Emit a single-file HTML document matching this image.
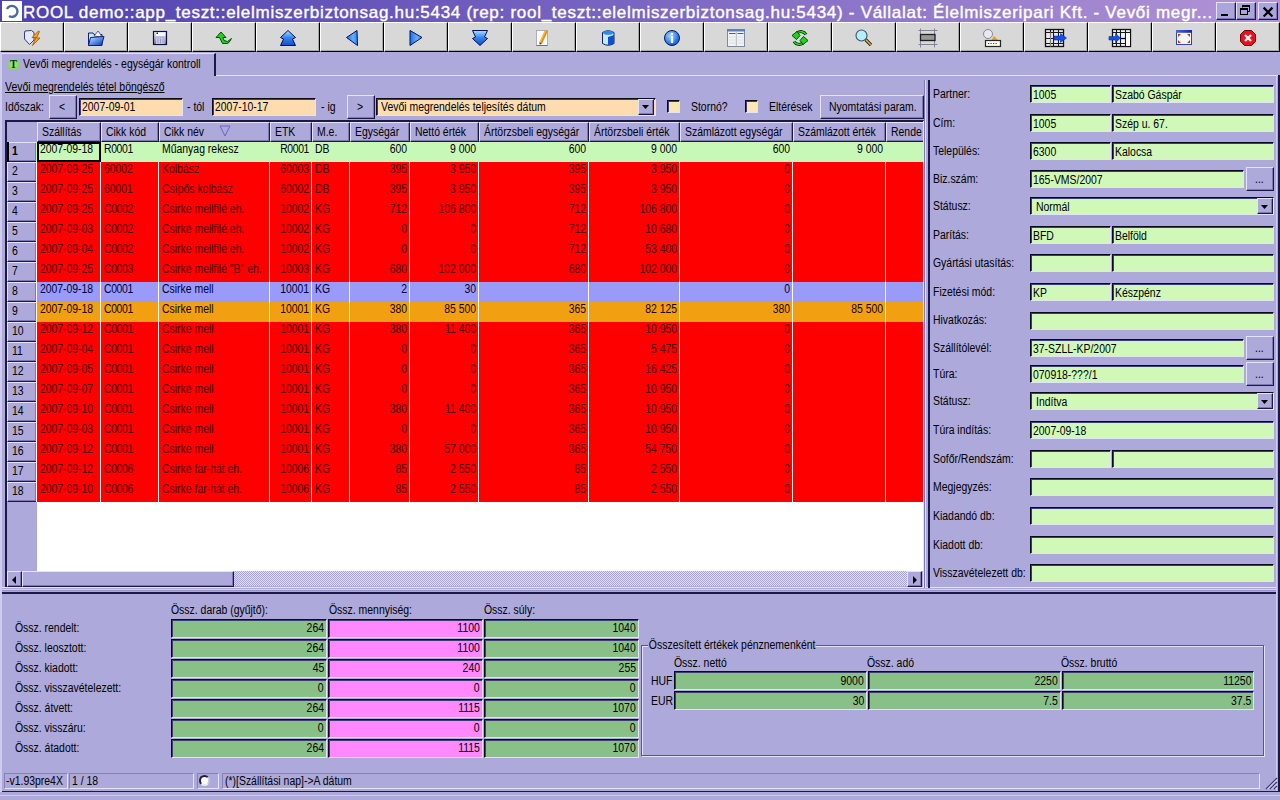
<!DOCTYPE html>
<html><head><meta charset="utf-8"><style>
html,body{margin:0;padding:0;width:1280px;height:800px;overflow:hidden;background:#ada9da;font-family:"Liberation Sans", sans-serif;font-size:11px;color:#000}
div{font-family:"Liberation Sans", sans-serif;letter-spacing:0px;white-space:nowrap}
</style></head><body>
<div style="position:absolute;left:0px;top:0px;width:1280px;height:22px;background:linear-gradient(to right,#4e42b0 0%,#7a66c2 50%,#b294d6 100%)"></div>
<div style="position:absolute;left:2px;top:1px;width:20px;height:20px;background:#fff"></div>
<svg style="position:absolute;left:4px;top:3px" width="16" height="16" viewBox="0 0 16 16"><path d="M3 6 A5.5 5.5 0 1 1 5 13" fill="none" stroke="#4a6aa0" stroke-width="2.4"/></svg>
<div style="position:absolute;left:23px;top:3px;font-size:17px;line-height:19px;color:#fff;white-space:nowrap;line-height:20px;letter-spacing:0.717px;-webkit-text-stroke:0.4px #fff;">ROOL demo::app_teszt::elelmiszerbiztonsag.hu:5434 (rep: rool_teszt::elelmiszerbiztonsag.hu:5434) - Vállalat: Élelmiszeripari Kft. - Vevői megr...</div>
<div style="position:absolute;left:1216px;top:2px;width:20px;height:18px;box-sizing:border-box;background:#aaa6d8;border-top:1px solid #e4e2f6;border-left:1px solid #e4e2f6;border-bottom:1px solid #1c1848;border-right:1px solid #1c1848;box-shadow:inset -1px -1px 0 #7c78b4;"></div>
<div style="position:absolute;left:1236px;top:2px;width:20px;height:18px;box-sizing:border-box;background:#aaa6d8;border-top:1px solid #e4e2f6;border-left:1px solid #e4e2f6;border-bottom:1px solid #1c1848;border-right:1px solid #1c1848;box-shadow:inset -1px -1px 0 #7c78b4;"></div>
<div style="position:absolute;left:1258px;top:2px;width:20px;height:18px;box-sizing:border-box;background:#aaa6d8;border-top:1px solid #e4e2f6;border-left:1px solid #e4e2f6;border-bottom:1px solid #1c1848;border-right:1px solid #1c1848;box-shadow:inset -1px -1px 0 #7c78b4;"></div>
<div style="position:absolute;left:1221px;top:14px;width:7px;height:2px;background:#000"></div>
<svg style="position:absolute;left:1239px;top:4px" width="12" height="12" viewBox="0 0 12 12"><path d="M3.5 1.5h7v6h-2M3.5 1.5v2" fill="none" stroke="#000" stroke-width="1"/><path d="M3 1h8v2H3z" fill="#000"/><rect x="1.5" y="4.5" width="7" height="6" fill="none" stroke="#000"/><rect x="1" y="4" width="8" height="2" fill="#000"/></svg>
<svg style="position:absolute;left:1262px;top:6px" width="11" height="11" viewBox="0 0 10 10"><path d="M1.5 1.5L9.5 9.5M9.5 1.5L1.5 9.5" stroke="#000" stroke-width="2"/></svg>
<div style="position:absolute;left:0px;top:22px;width:64px;height:30px;box-sizing:border-box;background:#d8d8d8;border-top:1px solid #fff;border-left:1px solid #fff;border-bottom:1px solid #000;border-right:1px solid #000;box-shadow:inset -1px -1px 0 #a8a8a8"></div>
<div style="position:absolute;left:64px;top:22px;width:64px;height:30px;box-sizing:border-box;background:#d8d8d8;border-top:1px solid #fff;border-left:1px solid #fff;border-bottom:1px solid #000;border-right:1px solid #000;box-shadow:inset -1px -1px 0 #a8a8a8"></div>
<div style="position:absolute;left:128px;top:22px;width:64px;height:30px;box-sizing:border-box;background:#d8d8d8;border-top:1px solid #fff;border-left:1px solid #fff;border-bottom:1px solid #000;border-right:1px solid #000;box-shadow:inset -1px -1px 0 #a8a8a8"></div>
<div style="position:absolute;left:192px;top:22px;width:64px;height:30px;box-sizing:border-box;background:#d8d8d8;border-top:1px solid #fff;border-left:1px solid #fff;border-bottom:1px solid #000;border-right:1px solid #000;box-shadow:inset -1px -1px 0 #a8a8a8"></div>
<div style="position:absolute;left:256px;top:22px;width:64px;height:30px;box-sizing:border-box;background:#d8d8d8;border-top:1px solid #fff;border-left:1px solid #fff;border-bottom:1px solid #000;border-right:1px solid #000;box-shadow:inset -1px -1px 0 #a8a8a8"></div>
<div style="position:absolute;left:320px;top:22px;width:64px;height:30px;box-sizing:border-box;background:#d8d8d8;border-top:1px solid #fff;border-left:1px solid #fff;border-bottom:1px solid #000;border-right:1px solid #000;box-shadow:inset -1px -1px 0 #a8a8a8"></div>
<div style="position:absolute;left:384px;top:22px;width:64px;height:30px;box-sizing:border-box;background:#d8d8d8;border-top:1px solid #fff;border-left:1px solid #fff;border-bottom:1px solid #000;border-right:1px solid #000;box-shadow:inset -1px -1px 0 #a8a8a8"></div>
<div style="position:absolute;left:448px;top:22px;width:64px;height:30px;box-sizing:border-box;background:#d8d8d8;border-top:1px solid #fff;border-left:1px solid #fff;border-bottom:1px solid #000;border-right:1px solid #000;box-shadow:inset -1px -1px 0 #a8a8a8"></div>
<div style="position:absolute;left:512px;top:22px;width:64px;height:30px;box-sizing:border-box;background:#d8d8d8;border-top:1px solid #fff;border-left:1px solid #fff;border-bottom:1px solid #000;border-right:1px solid #000;box-shadow:inset -1px -1px 0 #a8a8a8"></div>
<div style="position:absolute;left:576px;top:22px;width:64px;height:30px;box-sizing:border-box;background:#d8d8d8;border-top:1px solid #fff;border-left:1px solid #fff;border-bottom:1px solid #000;border-right:1px solid #000;box-shadow:inset -1px -1px 0 #a8a8a8"></div>
<div style="position:absolute;left:640px;top:22px;width:64px;height:30px;box-sizing:border-box;background:#d8d8d8;border-top:1px solid #fff;border-left:1px solid #fff;border-bottom:1px solid #000;border-right:1px solid #000;box-shadow:inset -1px -1px 0 #a8a8a8"></div>
<div style="position:absolute;left:704px;top:22px;width:64px;height:30px;box-sizing:border-box;background:#d8d8d8;border-top:1px solid #fff;border-left:1px solid #fff;border-bottom:1px solid #000;border-right:1px solid #000;box-shadow:inset -1px -1px 0 #a8a8a8"></div>
<div style="position:absolute;left:768px;top:22px;width:64px;height:30px;box-sizing:border-box;background:#d8d8d8;border-top:1px solid #fff;border-left:1px solid #fff;border-bottom:1px solid #000;border-right:1px solid #000;box-shadow:inset -1px -1px 0 #a8a8a8"></div>
<div style="position:absolute;left:832px;top:22px;width:64px;height:30px;box-sizing:border-box;background:#d8d8d8;border-top:1px solid #fff;border-left:1px solid #fff;border-bottom:1px solid #000;border-right:1px solid #000;box-shadow:inset -1px -1px 0 #a8a8a8"></div>
<div style="position:absolute;left:896px;top:22px;width:64px;height:30px;box-sizing:border-box;background:#d8d8d8;border-top:1px solid #fff;border-left:1px solid #fff;border-bottom:1px solid #000;border-right:1px solid #000;box-shadow:inset -1px -1px 0 #a8a8a8"></div>
<div style="position:absolute;left:960px;top:22px;width:64px;height:30px;box-sizing:border-box;background:#d8d8d8;border-top:1px solid #fff;border-left:1px solid #fff;border-bottom:1px solid #000;border-right:1px solid #000;box-shadow:inset -1px -1px 0 #a8a8a8"></div>
<div style="position:absolute;left:1024px;top:22px;width:64px;height:30px;box-sizing:border-box;background:#d8d8d8;border-top:1px solid #fff;border-left:1px solid #fff;border-bottom:1px solid #000;border-right:1px solid #000;box-shadow:inset -1px -1px 0 #a8a8a8"></div>
<div style="position:absolute;left:1088px;top:22px;width:64px;height:30px;box-sizing:border-box;background:#d8d8d8;border-top:1px solid #fff;border-left:1px solid #fff;border-bottom:1px solid #000;border-right:1px solid #000;box-shadow:inset -1px -1px 0 #a8a8a8"></div>
<div style="position:absolute;left:1152px;top:22px;width:64px;height:30px;box-sizing:border-box;background:#d8d8d8;border-top:1px solid #fff;border-left:1px solid #fff;border-bottom:1px solid #000;border-right:1px solid #000;box-shadow:inset -1px -1px 0 #a8a8a8"></div>
<div style="position:absolute;left:1216px;top:22px;width:64px;height:30px;box-sizing:border-box;background:#d8d8d8;border-top:1px solid #fff;border-left:1px solid #fff;border-bottom:1px solid #000;border-right:1px solid #000;box-shadow:inset -1px -1px 0 #a8a8a8"></div>
<svg style="position:absolute;left:0px;top:0px" width="0" height="0" viewBox="0 0 24 24"><defs>
<linearGradient id="gb" x1="0" y1="0" x2="0" y2="1"><stop offset="0" stop-color="#a8e0ff"/><stop offset="0.5" stop-color="#3080f0"/><stop offset="1" stop-color="#1050d0"/></linearGradient>
<linearGradient id="gbh" x1="0" y1="0" x2="1" y2="0"><stop offset="0" stop-color="#2070e0"/><stop offset="0.6" stop-color="#60b0ff"/><stop offset="1" stop-color="#3080f0"/></linearGradient>
<linearGradient id="gf" x1="0" y1="0" x2="1" y2="1"><stop offset="0" stop-color="#c0f0ff"/><stop offset="1" stop-color="#0030c0"/></linearGradient>
<linearGradient id="gfl" x1="0" y1="0" x2="0" y2="1"><stop offset="0" stop-color="#f0f4ff"/><stop offset="1" stop-color="#7070a0"/></linearGradient>
<radialGradient id="gi" cx="0.4" cy="0.35" r="0.7"><stop offset="0" stop-color="#a0d8ff"/><stop offset="1" stop-color="#0050e0"/></radialGradient>
</defs></svg>
<svg style="position:absolute;left:20px;top:26px" width="24" height="24" viewBox="0 0 24 24"><polygon points="5,5 11.5,4.5 14,6.5 14,14 9.5,18.5 4.5,13 4.5,7" fill="#e4e8fc" stroke="#3a3a80" stroke-width="1"/><polygon points="18.5,5 12,11.5 16,11.5 12.5,19.5 20,12 16.5,12 19.5,5.5" fill="#f4a820" stroke="#b05800" stroke-width="0.9"/></svg>
<svg style="position:absolute;left:84px;top:26px" width="24" height="24" viewBox="0 0 24 24"><polygon points="4.5,7 9,7 10,8.5 18,8.5 18,19.5 4.5,19.5" fill="#c8e8ff" stroke="#10207a" stroke-width="1"/><polygon points="10,10 14,5 17,9 17,11" fill="#f0f0ff" stroke="#404070" stroke-width="0.8"/><polygon points="6.5,11.5 20,10.5 17.5,19.5 4.5,19.5" fill="url(#gf)" stroke="#10207a" stroke-width="1"/></svg>
<svg style="position:absolute;left:148px;top:26px" width="24" height="24" viewBox="0 0 24 24"><rect x="5.5" y="5.5" width="13" height="13" fill="url(#gfl)" stroke="#101040" stroke-width="1.2"/><rect x="8" y="6.5" width="9" height="3.5" fill="#f4f8ff"/><rect x="8.5" y="6.5" width="1.5" height="1.5" fill="#202050"/><rect x="8" y="12" width="8.5" height="6" fill="#c8c8e8"/><path d="M10 12.5v5M12.5 12.5v5M15 12.5v5" stroke="#9090b8" stroke-width="0.8"/></svg>
<svg style="position:absolute;left:212px;top:26px" width="24" height="24" viewBox="0 0 24 24"><polygon points="4,11.5 9,6 14,11.5 11,11.5 12,14.5 15.5,15.5 19.5,12.5 17,16.5 15,17.5 10.5,17.5 7.5,11.5" fill="#18d818" stroke="#003a00" stroke-width="0.9"/></svg>
<svg style="position:absolute;left:276px;top:26px" width="24" height="24" viewBox="0 0 24 24"><polygon points="12,4.5 19.5,11.5 16.5,13 19.5,19.5 4.5,19.5 7.5,13 4.5,11.5" fill="url(#gb)" stroke="#001060" stroke-width="1"/></svg>
<svg style="position:absolute;left:340px;top:26px" width="24" height="24" viewBox="0 0 24 24"><polygon points="6.5,11.5 17,4.5 17.5,19.5" fill="url(#gbh)" stroke="#001060" stroke-width="1"/></svg>
<svg style="position:absolute;left:404px;top:26px" width="24" height="24" viewBox="0 0 24 24"><polygon points="6,4.5 18,11.5 6,19.5" fill="url(#gbh)" stroke="#001060" stroke-width="1"/></svg>
<svg style="position:absolute;left:468px;top:26px" width="24" height="24" viewBox="0 0 24 24"><polygon points="4.5,4.5 19.5,4.5 16.5,11 19.5,12.5 12,19.5 4.5,12.5 7.5,11" fill="url(#gb)" stroke="#001060" stroke-width="1"/></svg>
<svg style="position:absolute;left:532px;top:26px" width="24" height="24" viewBox="0 0 24 24"><rect x="4.5" y="4.5" width="11" height="15" fill="#f8fcff" stroke="#a0a0b0" stroke-width="0.8"/><path d="M4.5 19.5h11" stroke="#707080" stroke-width="1"/><path d="M8.5 17.5L14.5 4.5" stroke="#e89020" stroke-width="3"/><path d="M7.8 17L13.5 4.5" stroke="#f8d040" stroke-width="1"/><circle cx="8.3" cy="17.5" r="0.9" fill="#604020"/></svg>
<svg style="position:absolute;left:596px;top:26px" width="24" height="24" viewBox="0 0 24 24"><path d="M6.5 6.5Q12 3 18 6.5V17.5Q12 21 6.5 17.5Z" fill="#c0ecff" stroke="#102060" stroke-width="1"/><ellipse cx="12.2" cy="6.8" rx="5" ry="2" fill="#3088f0"/><path d="M12 11L18 9V17.5Q15 19 12 19Z" fill="#1050d0"/></svg>
<svg style="position:absolute;left:660px;top:26px" width="24" height="24" viewBox="0 0 24 24"><circle cx="12" cy="12" r="7.5" fill="url(#gi)" stroke="#001a60" stroke-width="1"/><rect x="10.8" y="10" width="2.4" height="7" fill="#f0f8ff"/><circle cx="12" cy="8" r="1.3" fill="#f0f8ff"/></svg>
<svg style="position:absolute;left:724px;top:26px" width="24" height="24" viewBox="0 0 24 24"><rect x="3.5" y="3.5" width="17" height="17" fill="#f0f2f4" stroke="#8088a0" stroke-width="1"/><rect x="3" y="3" width="18" height="2.5" fill="#6080b0"/><path d="M12.3 5.5v15" stroke="#b0b8c0" stroke-width="1"/><path d="M5 7.5h6.5M13.5 7.5h6" stroke="#506070" stroke-width="1"/><path d="M5 11h6M13.5 11h6M5 14h6M13.5 14h6M5 17h6M13.5 17h6" stroke="#d8dce0" stroke-width="0.8"/></svg>
<svg style="position:absolute;left:788px;top:26px" width="24" height="24" viewBox="0 0 24 24"><path d="M18 8.5C16 5.2 12 4.8 9 7" fill="none" stroke="#003a00" stroke-width="3"/><path d="M18 8.5C16 5.2 12 4.8 9 7" fill="none" stroke="#30e030" stroke-width="1.4"/><polygon points="4,9.5 9,5.5 12,9.5 8.5,13.5" fill="#18d818" stroke="#003a00" stroke-width="0.9"/><path d="M6 15.5C8 18.8 12 19.2 15 17" fill="none" stroke="#003a00" stroke-width="3"/><path d="M6 15.5C8 18.8 12 19.2 15 17" fill="none" stroke="#30e030" stroke-width="1.4"/><polygon points="20,14.5 15,18.5 12,14.5 15.5,10.5" fill="#18d818" stroke="#003a00" stroke-width="0.9"/></svg>
<svg style="position:absolute;left:852px;top:26px" width="24" height="24" viewBox="0 0 24 24"><path d="M13.5 13.5L19 19" stroke="#302000" stroke-width="3.2"/><path d="M13.8 13.8L18.8 18.8" stroke="#d8b060" stroke-width="1.6"/><circle cx="9.5" cy="9.5" r="5.5" fill="#b8ecfc" stroke="#305868" stroke-width="1.1"/></svg>
<svg style="position:absolute;left:916px;top:26px" width="24" height="24" viewBox="0 0 24 24"><path d="M2.5 4.5h19M2.5 18.5h19M4.5 2.5v19M18.5 2.5v19" stroke="#7a7a9a" stroke-width="0.9"/><rect x="4.5" y="8.5" width="14.5" height="6" fill="#989898" stroke="#202020" stroke-width="1.3"/></svg>
<svg style="position:absolute;left:980px;top:26px" width="24" height="24" viewBox="0 0 24 24"><circle cx="8" cy="8" r="4.5" fill="#e8eaf0" stroke="#8088a0" stroke-width="1"/><polygon points="11.5,14 14,10 18,14" fill="#e8a010"/><rect x="5.5" y="14.5" width="15" height="6" fill="#fafaf4" stroke="#202820" stroke-width="1.2"/><path d="M8 17.5h10" stroke="#404040" stroke-width="1.2" stroke-dasharray="1.2 1.3"/></svg>
<svg style="position:absolute;left:1044px;top:26px" width="24" height="24" viewBox="0 0 24 24"><rect x="1.5" y="3.5" width="18" height="17" fill="#ece8f4" stroke="#101010" stroke-width="1.3"/><path d="M1.5 6.5h18M1.5 12.5h18M1.5 17.5h18M6.5 3.5v17M9.5 3.5v17M14.5 3.5v17" stroke="#181818" stroke-width="1.1"/><path d="M6.5 6.5v14" stroke="#808070" stroke-width="1"/><polygon points="10,10 16.5,10 16.5,7.5 22.5,12 16.5,16.5 16.5,14 10,14" fill="#1050f0" stroke="#0830a0" stroke-width="0.6"/></svg>
<svg style="position:absolute;left:1108px;top:26px" width="24" height="24" viewBox="0 0 24 24"><rect x="4.5" y="3.5" width="18" height="17" fill="#f4f4f8" stroke="#101010" stroke-width="1.3"/><path d="M4.5 6.5h18M4.5 17.5h13M8.5 3.5v17M12.5 3.5v17M17.5 3.5v17" stroke="#181818" stroke-width="1.1"/><rect x="18" y="7" width="4" height="13" fill="#fcfcf8"/><path d="M13 12.5h4" stroke="#000" stroke-width="1.3"/><polygon points="1,10.5 7.5,10.5 7.5,7.5 12.5,12 7.5,16.5 7.5,14 1,14" fill="#1050f0" stroke="#0830a0" stroke-width="0.6"/></svg>
<svg style="position:absolute;left:1172px;top:26px" width="24" height="24" viewBox="0 0 24 24"><defs><linearGradient id="gt19" x1="0" y1="0" x2="1" y2="0"><stop offset="0" stop-color="#4070d0"/><stop offset="1" stop-color="#0828b0"/></linearGradient></defs><rect x="4.5" y="4.5" width="15" height="14" fill="#f8f4f8" stroke="#2848a8" stroke-width="1"/><rect x="4" y="4" width="16" height="2.8" fill="url(#gt19)"/><polygon points="6,8 9,8 6,11" fill="#d03010"/><polygon points="18,8 15,8 18,11" fill="#d03010"/><polygon points="6,17 9,17 6,14" fill="#d03010"/><polygon points="18,17 15,17 18,14" fill="#d03010"/></svg>
<svg style="position:absolute;left:1236px;top:26px" width="24" height="24" viewBox="0 0 24 24"><polygon points="8.5,4.5 15.5,4.5 19.5,8.5 19.5,15.5 15.5,19.5 8.5,19.5 4.5,15.5 4.5,8.5" fill="#e81020" stroke="#700008" stroke-width="1"/><path d="M9 9L15 15M15 9L9 15" stroke="#fff8f0" stroke-width="2.4"/></svg>
<div style="position:absolute;left:0px;top:52px;width:1280px;height:748px;background:#ada9da"></div>
<div style="position:absolute;left:0px;top:53px;width:216px;height:23px;box-sizing:border-box;border-top:1px solid #e4e2f6;border-left:1px solid #e4e2f6;border-right:2px solid #1c1848;background:#ada9da"></div>
<div style="position:absolute;left:216px;top:75px;width:1064px;height:1px;background:#e4e2f6"></div>
<div style="position:absolute;left:8px;top:59px;width:11px;height:11px;background:radial-gradient(circle,#98e070 30%,#88c070 100%);border-radius:3px"></div>
<div style="position:absolute;left:10px;top:58px;font-size:12px;transform:scaleX(0.87);transform-origin:0 0;line-height:13px;color:#003800;white-space:nowrap;font-weight:bold;font-family:Liberation Serif,serif;">T</div>
<div style="position:absolute;left:23px;top:58px;font-size:12px;transform:scaleX(0.87);transform-origin:0 0;line-height:13px;color:#000;white-space:nowrap;">Vevői megrendelés - egységár kontroll</div>
<div style="position:absolute;left:5px;top:81px;font-size:12px;transform:scaleX(0.87);transform-origin:0 0;line-height:13px;color:#000;white-space:nowrap;"><u>Vevői megrendelés tétel böngésző</u></div>
<div style="position:absolute;left:5px;top:101px;font-size:12px;transform:scaleX(0.87);transform-origin:0 0;line-height:13px;color:#000;white-space:nowrap;">Időszak:</div>
<div style="position:absolute;left:49px;top:95px;width:28px;height:24px;box-sizing:border-box;background:#ada9da;border-top:1px solid #e4e2f6;border-left:1px solid #e4e2f6;border-bottom:1px solid #1c1848;border-right:1px solid #1c1848;box-shadow:inset -1px -1px 0 #7c78b4;"><div style="position:absolute;left:9px;top:4px;font-size:12px;transform:scaleX(0.87);transform-origin:0 0">&lt;</div></div>
<div style="position:absolute;left:79px;top:98px;width:104px;height:18px;box-sizing:border-box;background:#fedcb0;border-top:1px solid #0c0a20;border-left:1px solid #0c0a20;border-bottom:1px solid #e4e2f6;border-right:1px solid #e4e2f6;box-shadow:inset 1px 1px 0 #403c70;"><div style="position:absolute;left:2px;top:1px;font-size:12px;transform:scaleX(0.87);transform-origin:0 0">2007-09-01</div></div>
<div style="position:absolute;left:187px;top:101px;font-size:12px;transform:scaleX(0.87);transform-origin:0 0;line-height:13px;color:#000;white-space:nowrap;">- tól</div>
<div style="position:absolute;left:212px;top:98px;width:104px;height:18px;box-sizing:border-box;background:#fedcb0;border-top:1px solid #0c0a20;border-left:1px solid #0c0a20;border-bottom:1px solid #e4e2f6;border-right:1px solid #e4e2f6;box-shadow:inset 1px 1px 0 #403c70;"><div style="position:absolute;left:2px;top:1px;font-size:12px;transform:scaleX(0.87);transform-origin:0 0">2007-10-17</div></div>
<div style="position:absolute;left:321px;top:101px;font-size:12px;transform:scaleX(0.87);transform-origin:0 0;line-height:13px;color:#000;white-space:nowrap;">- ig</div>
<div style="position:absolute;left:347px;top:95px;width:28px;height:24px;box-sizing:border-box;background:#ada9da;border-top:1px solid #e4e2f6;border-left:1px solid #e4e2f6;border-bottom:1px solid #1c1848;border-right:1px solid #1c1848;box-shadow:inset -1px -1px 0 #7c78b4;"><div style="position:absolute;left:9px;top:4px;font-size:12px;transform:scaleX(0.87);transform-origin:0 0">&gt;</div></div>
<div style="position:absolute;left:376px;top:98px;width:280px;height:18px;box-sizing:border-box;background:#fedcb0;border-top:1px solid #0c0a20;border-left:1px solid #0c0a20;border-bottom:1px solid #e4e2f6;border-right:1px solid #e4e2f6;box-shadow:inset 1px 1px 0 #403c70;"><div style="position:absolute;left:4px;top:1px;font-size:12px;transform:scaleX(0.87);transform-origin:0 0">Vevői megrendelés teljesítés dátum</div></div>
<div style="position:absolute;left:638px;top:99px;width:16px;height:16px;box-sizing:border-box;background:#ada9da;border-top:1px solid #e4e2f6;border-left:1px solid #e4e2f6;border-bottom:1px solid #1c1848;border-right:1px solid #1c1848;box-shadow:inset -1px -1px 0 #7c78b4;"><svg style="position:absolute;left:3px;top:5px" width="8" height="5"><path d="M0 0h7l-3.5 4z" fill="#000"/></svg></div>
<div style="position:absolute;left:667px;top:100px;width:13px;height:13px;box-sizing:border-box;background:#fce6b4;border-top:1px solid #0c0a20;border-left:1px solid #0c0a20;border-bottom:1px solid #e4e2f6;border-right:1px solid #e4e2f6;box-shadow:inset 1px 1px 0 #403c70;"></div>
<div style="position:absolute;left:691px;top:101px;font-size:12px;transform:scaleX(0.87);transform-origin:0 0;line-height:13px;color:#000;white-space:nowrap;">Stornó?</div>
<div style="position:absolute;left:745px;top:100px;width:13px;height:13px;box-sizing:border-box;background:#fce6b4;border-top:1px solid #0c0a20;border-left:1px solid #0c0a20;border-bottom:1px solid #e4e2f6;border-right:1px solid #e4e2f6;box-shadow:inset 1px 1px 0 #403c70;"></div>
<div style="position:absolute;left:769px;top:101px;font-size:12px;transform:scaleX(0.87);transform-origin:0 0;line-height:13px;color:#000;white-space:nowrap;">Eltérések</div>
<div style="position:absolute;left:820px;top:95px;width:104px;height:24px;box-sizing:border-box;background:#ada9da;border-top:1px solid #e4e2f6;border-left:1px solid #e4e2f6;border-bottom:1px solid #1c1848;border-right:1px solid #1c1848;box-shadow:inset -1px -1px 0 #7c78b4;"><div style="position:absolute;left:8px;top:4px;font-size:12px;transform:scaleX(0.87);transform-origin:0 0">Nyomtatási param.</div></div>
<div style="position:absolute;left:5px;top:120px;width:919px;height:468px;box-sizing:border-box;border-top:2px solid #1c1848;border-left:2px solid #1c1848;border-bottom:1px solid #e4e2f6;border-right:1px solid #e4e2f6;background:#ada9da"></div>
<div style="position:absolute;left:37px;top:141px;width:886px;height:430px;background:#fff"></div>
<div style="position:absolute;left:7px;top:122px;width:30px;height:19px;background:#ada9da"></div>
<div style="position:absolute;left:37px;top:122px;width:64px;height:20px;box-sizing:border-box;background:#ada9da;border-top:1px solid #e4e2f6;border-left:1px solid #e4e2f6;border-bottom:1px solid #1c1848;border-right:1px solid #1c1848;box-shadow:inset -1px -1px 0 #7c78b4;overflow:hidden;"><div style="position:absolute;left:4px;top:2px;font-size:12px;transform:scaleX(0.87);transform-origin:0 0;white-space:nowrap">Szállítás</div></div>
<div style="position:absolute;left:101px;top:122px;width:58px;height:20px;box-sizing:border-box;background:#ada9da;border-top:1px solid #e4e2f6;border-left:1px solid #e4e2f6;border-bottom:1px solid #1c1848;border-right:1px solid #1c1848;box-shadow:inset -1px -1px 0 #7c78b4;overflow:hidden;"><div style="position:absolute;left:4px;top:2px;font-size:12px;transform:scaleX(0.87);transform-origin:0 0;white-space:nowrap">Cikk kód</div></div>
<div style="position:absolute;left:159px;top:122px;width:111px;height:20px;box-sizing:border-box;background:#ada9da;border-top:1px solid #e4e2f6;border-left:1px solid #e4e2f6;border-bottom:1px solid #1c1848;border-right:1px solid #1c1848;box-shadow:inset -1px -1px 0 #7c78b4;overflow:hidden;"><div style="position:absolute;left:4px;top:2px;font-size:12px;transform:scaleX(0.87);transform-origin:0 0;white-space:nowrap">Cikk név</div></div>
<div style="position:absolute;left:270px;top:122px;width:42px;height:20px;box-sizing:border-box;background:#ada9da;border-top:1px solid #e4e2f6;border-left:1px solid #e4e2f6;border-bottom:1px solid #1c1848;border-right:1px solid #1c1848;box-shadow:inset -1px -1px 0 #7c78b4;overflow:hidden;"><div style="position:absolute;left:4px;top:2px;font-size:12px;transform:scaleX(0.87);transform-origin:0 0;white-space:nowrap">ETK</div></div>
<div style="position:absolute;left:312px;top:122px;width:38px;height:20px;box-sizing:border-box;background:#ada9da;border-top:1px solid #e4e2f6;border-left:1px solid #e4e2f6;border-bottom:1px solid #1c1848;border-right:1px solid #1c1848;box-shadow:inset -1px -1px 0 #7c78b4;overflow:hidden;"><div style="position:absolute;left:4px;top:2px;font-size:12px;transform:scaleX(0.87);transform-origin:0 0;white-space:nowrap">M.e.</div></div>
<div style="position:absolute;left:350px;top:122px;width:60px;height:20px;box-sizing:border-box;background:#ada9da;border-top:1px solid #e4e2f6;border-left:1px solid #e4e2f6;border-bottom:1px solid #1c1848;border-right:1px solid #1c1848;box-shadow:inset -1px -1px 0 #7c78b4;overflow:hidden;"><div style="position:absolute;left:4px;top:2px;font-size:12px;transform:scaleX(0.87);transform-origin:0 0;white-space:nowrap">Egységár</div></div>
<div style="position:absolute;left:410px;top:122px;width:69px;height:20px;box-sizing:border-box;background:#ada9da;border-top:1px solid #e4e2f6;border-left:1px solid #e4e2f6;border-bottom:1px solid #1c1848;border-right:1px solid #1c1848;box-shadow:inset -1px -1px 0 #7c78b4;overflow:hidden;"><div style="position:absolute;left:4px;top:2px;font-size:12px;transform:scaleX(0.87);transform-origin:0 0;white-space:nowrap">Nettó érték</div></div>
<div style="position:absolute;left:479px;top:122px;width:110px;height:20px;box-sizing:border-box;background:#ada9da;border-top:1px solid #e4e2f6;border-left:1px solid #e4e2f6;border-bottom:1px solid #1c1848;border-right:1px solid #1c1848;box-shadow:inset -1px -1px 0 #7c78b4;overflow:hidden;"><div style="position:absolute;left:4px;top:2px;font-size:12px;transform:scaleX(0.87);transform-origin:0 0;white-space:nowrap">Ártörzsbeli egységár</div></div>
<div style="position:absolute;left:589px;top:122px;width:91px;height:20px;box-sizing:border-box;background:#ada9da;border-top:1px solid #e4e2f6;border-left:1px solid #e4e2f6;border-bottom:1px solid #1c1848;border-right:1px solid #1c1848;box-shadow:inset -1px -1px 0 #7c78b4;overflow:hidden;"><div style="position:absolute;left:4px;top:2px;font-size:12px;transform:scaleX(0.87);transform-origin:0 0;white-space:nowrap">Ártörzsbeli érték</div></div>
<div style="position:absolute;left:680px;top:122px;width:113px;height:20px;box-sizing:border-box;background:#ada9da;border-top:1px solid #e4e2f6;border-left:1px solid #e4e2f6;border-bottom:1px solid #1c1848;border-right:1px solid #1c1848;box-shadow:inset -1px -1px 0 #7c78b4;overflow:hidden;"><div style="position:absolute;left:4px;top:2px;font-size:12px;transform:scaleX(0.87);transform-origin:0 0;white-space:nowrap">Számlázott egységár</div></div>
<div style="position:absolute;left:793px;top:122px;width:93px;height:20px;box-sizing:border-box;background:#ada9da;border-top:1px solid #e4e2f6;border-left:1px solid #e4e2f6;border-bottom:1px solid #1c1848;border-right:1px solid #1c1848;box-shadow:inset -1px -1px 0 #7c78b4;overflow:hidden;"><div style="position:absolute;left:4px;top:2px;font-size:12px;transform:scaleX(0.87);transform-origin:0 0;white-space:nowrap">Számlázott érték</div></div>
<div style="position:absolute;left:886px;top:122px;width:40px;height:20px;box-sizing:border-box;background:#ada9da;border-top:1px solid #e4e2f6;border-left:1px solid #e4e2f6;border-bottom:1px solid #1c1848;border-right:1px solid #1c1848;box-shadow:inset -1px -1px 0 #7c78b4;overflow:hidden;"><div style="position:absolute;left:4px;top:2px;font-size:12px;transform:scaleX(0.87);transform-origin:0 0;white-space:nowrap">Rende</div></div>
<svg style="position:absolute;left:219px;top:125px" width="12" height="12"><path d="M1 1h10L6 11z" fill="none" stroke="#6a64c8" stroke-width="1"/></svg>
<div style="position:absolute;left:7px;top:142px;width:30px;height:20px;box-sizing:border-box;background:#ada9da;border-top:1px solid #e4e2f6;border-left:1px solid #e4e2f6;border-bottom:1px solid #1c1848;border-right:1px solid #1c1848;box-shadow:inset -1px -1px 0 #7c78b4;"><div style="position:absolute;left:4px;top:2px;font-size:12px;transform:scaleX(0.87);transform-origin:0 0;line-height:13px;font-weight:bold;">1</div></div>
<div style="position:absolute;left:37px;top:142px;width:886px;height:20px;background:#c8f8b8"></div>
<div style="position:absolute;left:36px;top:142px;width:1px;height:20px;background:#c8f8b8"></div>
<div style="position:absolute;left:40px;top:142px;font-size:12px;transform:scaleX(0.87);transform-origin:0 0;color:#000;white-space:nowrap;letter-spacing:-0.05px;">2007-09-18</div>
<div style="position:absolute;left:100px;top:142px;width:1px;height:20px;background:#c8f8b8"></div>
<div style="position:absolute;left:104px;top:142px;font-size:12px;transform:scaleX(0.87);transform-origin:0 0;color:#000;white-space:nowrap;letter-spacing:-0.45px;">R0001</div>
<div style="position:absolute;left:158px;top:142px;width:1px;height:20px;background:#c8f8b8"></div>
<div style="position:absolute;left:162px;top:142px;font-size:12px;transform:scaleX(0.87);transform-origin:0 0;color:#000;white-space:nowrap;">Műanyag rekesz</div>
<div style="position:absolute;left:269px;top:142px;width:1px;height:20px;background:#c8f8b8"></div>
<div style="position:absolute;left:270px;top:142px;width:39px;text-align:right;font-size:12px;transform:scaleX(0.87);transform-origin:100% 0;color:#000;white-space:nowrap;letter-spacing:-0.45px;">R0001</div>
<div style="position:absolute;left:311px;top:142px;width:1px;height:20px;background:#c8f8b8"></div>
<div style="position:absolute;left:315px;top:142px;font-size:12px;transform:scaleX(0.87);transform-origin:0 0;color:#000;white-space:nowrap;">DB</div>
<div style="position:absolute;left:349px;top:142px;width:1px;height:20px;background:#c8f8b8"></div>
<div style="position:absolute;left:350px;top:142px;width:57px;text-align:right;font-size:12px;transform:scaleX(0.87);transform-origin:100% 0;color:#000;white-space:nowrap;letter-spacing:-0.05px;">600</div>
<div style="position:absolute;left:409px;top:142px;width:1px;height:20px;background:#c8f8b8"></div>
<div style="position:absolute;left:410px;top:142px;width:66px;text-align:right;font-size:12px;transform:scaleX(0.87);transform-origin:100% 0;color:#000;white-space:nowrap;letter-spacing:-0.05px;">9 000</div>
<div style="position:absolute;left:478px;top:142px;width:1px;height:20px;background:#c8f8b8"></div>
<div style="position:absolute;left:479px;top:142px;width:107px;text-align:right;font-size:12px;transform:scaleX(0.87);transform-origin:100% 0;color:#000;white-space:nowrap;letter-spacing:-0.05px;">600</div>
<div style="position:absolute;left:588px;top:142px;width:1px;height:20px;background:#c8f8b8"></div>
<div style="position:absolute;left:589px;top:142px;width:88px;text-align:right;font-size:12px;transform:scaleX(0.87);transform-origin:100% 0;color:#000;white-space:nowrap;letter-spacing:-0.05px;">9 000</div>
<div style="position:absolute;left:679px;top:142px;width:1px;height:20px;background:#c8f8b8"></div>
<div style="position:absolute;left:680px;top:142px;width:110px;text-align:right;font-size:12px;transform:scaleX(0.87);transform-origin:100% 0;color:#000;white-space:nowrap;letter-spacing:-0.05px;">600</div>
<div style="position:absolute;left:792px;top:142px;width:1px;height:20px;background:#c8f8b8"></div>
<div style="position:absolute;left:793px;top:142px;width:90px;text-align:right;font-size:12px;transform:scaleX(0.87);transform-origin:100% 0;color:#000;white-space:nowrap;letter-spacing:-0.05px;">9 000</div>
<div style="position:absolute;left:885px;top:142px;width:1px;height:20px;background:#c8f8b8"></div>
<div style="position:absolute;left:7px;top:162px;width:30px;height:20px;box-sizing:border-box;background:#ada9da;border-top:1px solid #e4e2f6;border-left:1px solid #e4e2f6;border-bottom:1px solid #1c1848;border-right:1px solid #1c1848;box-shadow:inset -1px -1px 0 #7c78b4;"><div style="position:absolute;left:4px;top:2px;font-size:12px;transform:scaleX(0.87);transform-origin:0 0;line-height:13px;">2</div></div>
<div style="position:absolute;left:37px;top:162px;width:886px;height:20px;background:#ff0000"></div>
<div style="position:absolute;left:36px;top:162px;width:1px;height:20px;background:#fff8f0"></div>
<div style="position:absolute;left:40px;top:162px;font-size:12px;transform:scaleX(0.87);transform-origin:0 0;color:#4a0000;white-space:nowrap;letter-spacing:-0.05px;">2007-09-25</div>
<div style="position:absolute;left:100px;top:162px;width:1px;height:20px;background:#fff8f0"></div>
<div style="position:absolute;left:104px;top:162px;font-size:12px;transform:scaleX(0.87);transform-origin:0 0;color:#4a0000;white-space:nowrap;letter-spacing:-0.05px;">60002</div>
<div style="position:absolute;left:158px;top:162px;width:1px;height:20px;background:#fff8f0"></div>
<div style="position:absolute;left:162px;top:162px;font-size:12px;transform:scaleX(0.87);transform-origin:0 0;color:#4a0000;white-space:nowrap;">Kolbász</div>
<div style="position:absolute;left:269px;top:162px;width:1px;height:20px;background:#fff8f0"></div>
<div style="position:absolute;left:270px;top:162px;width:39px;text-align:right;font-size:12px;transform:scaleX(0.87);transform-origin:100% 0;color:#4a0000;white-space:nowrap;letter-spacing:-0.05px;">60003</div>
<div style="position:absolute;left:311px;top:162px;width:1px;height:20px;background:#fff8f0"></div>
<div style="position:absolute;left:315px;top:162px;font-size:12px;transform:scaleX(0.87);transform-origin:0 0;color:#4a0000;white-space:nowrap;">DB</div>
<div style="position:absolute;left:349px;top:162px;width:1px;height:20px;background:#fff8f0"></div>
<div style="position:absolute;left:350px;top:162px;width:57px;text-align:right;font-size:12px;transform:scaleX(0.87);transform-origin:100% 0;color:#4a0000;white-space:nowrap;letter-spacing:-0.05px;">395</div>
<div style="position:absolute;left:409px;top:162px;width:1px;height:20px;background:#fff8f0"></div>
<div style="position:absolute;left:410px;top:162px;width:66px;text-align:right;font-size:12px;transform:scaleX(0.87);transform-origin:100% 0;color:#4a0000;white-space:nowrap;letter-spacing:-0.05px;">3 950</div>
<div style="position:absolute;left:478px;top:162px;width:1px;height:20px;background:#fff8f0"></div>
<div style="position:absolute;left:479px;top:162px;width:107px;text-align:right;font-size:12px;transform:scaleX(0.87);transform-origin:100% 0;color:#4a0000;white-space:nowrap;letter-spacing:-0.05px;">395</div>
<div style="position:absolute;left:588px;top:162px;width:1px;height:20px;background:#fff8f0"></div>
<div style="position:absolute;left:589px;top:162px;width:88px;text-align:right;font-size:12px;transform:scaleX(0.87);transform-origin:100% 0;color:#4a0000;white-space:nowrap;letter-spacing:-0.05px;">3 950</div>
<div style="position:absolute;left:679px;top:162px;width:1px;height:20px;background:#fff8f0"></div>
<div style="position:absolute;left:680px;top:162px;width:110px;text-align:right;font-size:12px;transform:scaleX(0.87);transform-origin:100% 0;color:#4a0000;white-space:nowrap;letter-spacing:-0.05px;">0</div>
<div style="position:absolute;left:792px;top:162px;width:1px;height:20px;background:#fff8f0"></div>
<div style="position:absolute;left:885px;top:162px;width:1px;height:20px;background:#fff8f0"></div>
<div style="position:absolute;left:7px;top:182px;width:30px;height:20px;box-sizing:border-box;background:#ada9da;border-top:1px solid #e4e2f6;border-left:1px solid #e4e2f6;border-bottom:1px solid #1c1848;border-right:1px solid #1c1848;box-shadow:inset -1px -1px 0 #7c78b4;"><div style="position:absolute;left:4px;top:2px;font-size:12px;transform:scaleX(0.87);transform-origin:0 0;line-height:13px;">3</div></div>
<div style="position:absolute;left:37px;top:182px;width:886px;height:20px;background:#ff0000"></div>
<div style="position:absolute;left:36px;top:182px;width:1px;height:20px;background:#fff8f0"></div>
<div style="position:absolute;left:40px;top:182px;font-size:12px;transform:scaleX(0.87);transform-origin:0 0;color:#4a0000;white-space:nowrap;letter-spacing:-0.05px;">2007-09-25</div>
<div style="position:absolute;left:100px;top:182px;width:1px;height:20px;background:#fff8f0"></div>
<div style="position:absolute;left:104px;top:182px;font-size:12px;transform:scaleX(0.87);transform-origin:0 0;color:#4a0000;white-space:nowrap;letter-spacing:-0.05px;">60001</div>
<div style="position:absolute;left:158px;top:182px;width:1px;height:20px;background:#fff8f0"></div>
<div style="position:absolute;left:162px;top:182px;font-size:12px;transform:scaleX(0.87);transform-origin:0 0;color:#4a0000;white-space:nowrap;">Csípős kolbász</div>
<div style="position:absolute;left:269px;top:182px;width:1px;height:20px;background:#fff8f0"></div>
<div style="position:absolute;left:270px;top:182px;width:39px;text-align:right;font-size:12px;transform:scaleX(0.87);transform-origin:100% 0;color:#4a0000;white-space:nowrap;letter-spacing:-0.05px;">60002</div>
<div style="position:absolute;left:311px;top:182px;width:1px;height:20px;background:#fff8f0"></div>
<div style="position:absolute;left:315px;top:182px;font-size:12px;transform:scaleX(0.87);transform-origin:0 0;color:#4a0000;white-space:nowrap;">DB</div>
<div style="position:absolute;left:349px;top:182px;width:1px;height:20px;background:#fff8f0"></div>
<div style="position:absolute;left:350px;top:182px;width:57px;text-align:right;font-size:12px;transform:scaleX(0.87);transform-origin:100% 0;color:#4a0000;white-space:nowrap;letter-spacing:-0.05px;">395</div>
<div style="position:absolute;left:409px;top:182px;width:1px;height:20px;background:#fff8f0"></div>
<div style="position:absolute;left:410px;top:182px;width:66px;text-align:right;font-size:12px;transform:scaleX(0.87);transform-origin:100% 0;color:#4a0000;white-space:nowrap;letter-spacing:-0.05px;">3 950</div>
<div style="position:absolute;left:478px;top:182px;width:1px;height:20px;background:#fff8f0"></div>
<div style="position:absolute;left:479px;top:182px;width:107px;text-align:right;font-size:12px;transform:scaleX(0.87);transform-origin:100% 0;color:#4a0000;white-space:nowrap;letter-spacing:-0.05px;">395</div>
<div style="position:absolute;left:588px;top:182px;width:1px;height:20px;background:#fff8f0"></div>
<div style="position:absolute;left:589px;top:182px;width:88px;text-align:right;font-size:12px;transform:scaleX(0.87);transform-origin:100% 0;color:#4a0000;white-space:nowrap;letter-spacing:-0.05px;">3 950</div>
<div style="position:absolute;left:679px;top:182px;width:1px;height:20px;background:#fff8f0"></div>
<div style="position:absolute;left:680px;top:182px;width:110px;text-align:right;font-size:12px;transform:scaleX(0.87);transform-origin:100% 0;color:#4a0000;white-space:nowrap;letter-spacing:-0.05px;">0</div>
<div style="position:absolute;left:792px;top:182px;width:1px;height:20px;background:#fff8f0"></div>
<div style="position:absolute;left:885px;top:182px;width:1px;height:20px;background:#fff8f0"></div>
<div style="position:absolute;left:7px;top:202px;width:30px;height:20px;box-sizing:border-box;background:#ada9da;border-top:1px solid #e4e2f6;border-left:1px solid #e4e2f6;border-bottom:1px solid #1c1848;border-right:1px solid #1c1848;box-shadow:inset -1px -1px 0 #7c78b4;"><div style="position:absolute;left:4px;top:2px;font-size:12px;transform:scaleX(0.87);transform-origin:0 0;line-height:13px;">4</div></div>
<div style="position:absolute;left:37px;top:202px;width:886px;height:20px;background:#ff0000"></div>
<div style="position:absolute;left:36px;top:202px;width:1px;height:20px;background:#fff8f0"></div>
<div style="position:absolute;left:40px;top:202px;font-size:12px;transform:scaleX(0.87);transform-origin:0 0;color:#4a0000;white-space:nowrap;letter-spacing:-0.05px;">2007-09-25</div>
<div style="position:absolute;left:100px;top:202px;width:1px;height:20px;background:#fff8f0"></div>
<div style="position:absolute;left:104px;top:202px;font-size:12px;transform:scaleX(0.87);transform-origin:0 0;color:#4a0000;white-space:nowrap;letter-spacing:-0.45px;">C0002</div>
<div style="position:absolute;left:158px;top:202px;width:1px;height:20px;background:#fff8f0"></div>
<div style="position:absolute;left:162px;top:202px;font-size:12px;transform:scaleX(0.87);transform-origin:0 0;color:#4a0000;white-space:nowrap;">Csirke mellfilé eh.</div>
<div style="position:absolute;left:269px;top:202px;width:1px;height:20px;background:#fff8f0"></div>
<div style="position:absolute;left:270px;top:202px;width:39px;text-align:right;font-size:12px;transform:scaleX(0.87);transform-origin:100% 0;color:#4a0000;white-space:nowrap;letter-spacing:-0.05px;">10002</div>
<div style="position:absolute;left:311px;top:202px;width:1px;height:20px;background:#fff8f0"></div>
<div style="position:absolute;left:315px;top:202px;font-size:12px;transform:scaleX(0.87);transform-origin:0 0;color:#4a0000;white-space:nowrap;">KG</div>
<div style="position:absolute;left:349px;top:202px;width:1px;height:20px;background:#fff8f0"></div>
<div style="position:absolute;left:350px;top:202px;width:57px;text-align:right;font-size:12px;transform:scaleX(0.87);transform-origin:100% 0;color:#4a0000;white-space:nowrap;letter-spacing:-0.05px;">712</div>
<div style="position:absolute;left:409px;top:202px;width:1px;height:20px;background:#fff8f0"></div>
<div style="position:absolute;left:410px;top:202px;width:66px;text-align:right;font-size:12px;transform:scaleX(0.87);transform-origin:100% 0;color:#4a0000;white-space:nowrap;letter-spacing:-0.05px;">106 800</div>
<div style="position:absolute;left:478px;top:202px;width:1px;height:20px;background:#fff8f0"></div>
<div style="position:absolute;left:479px;top:202px;width:107px;text-align:right;font-size:12px;transform:scaleX(0.87);transform-origin:100% 0;color:#4a0000;white-space:nowrap;letter-spacing:-0.05px;">712</div>
<div style="position:absolute;left:588px;top:202px;width:1px;height:20px;background:#fff8f0"></div>
<div style="position:absolute;left:589px;top:202px;width:88px;text-align:right;font-size:12px;transform:scaleX(0.87);transform-origin:100% 0;color:#4a0000;white-space:nowrap;letter-spacing:-0.05px;">106 800</div>
<div style="position:absolute;left:679px;top:202px;width:1px;height:20px;background:#fff8f0"></div>
<div style="position:absolute;left:680px;top:202px;width:110px;text-align:right;font-size:12px;transform:scaleX(0.87);transform-origin:100% 0;color:#4a0000;white-space:nowrap;letter-spacing:-0.05px;">0</div>
<div style="position:absolute;left:792px;top:202px;width:1px;height:20px;background:#fff8f0"></div>
<div style="position:absolute;left:885px;top:202px;width:1px;height:20px;background:#fff8f0"></div>
<div style="position:absolute;left:7px;top:222px;width:30px;height:20px;box-sizing:border-box;background:#ada9da;border-top:1px solid #e4e2f6;border-left:1px solid #e4e2f6;border-bottom:1px solid #1c1848;border-right:1px solid #1c1848;box-shadow:inset -1px -1px 0 #7c78b4;"><div style="position:absolute;left:4px;top:2px;font-size:12px;transform:scaleX(0.87);transform-origin:0 0;line-height:13px;">5</div></div>
<div style="position:absolute;left:37px;top:222px;width:886px;height:20px;background:#ff0000"></div>
<div style="position:absolute;left:36px;top:222px;width:1px;height:20px;background:#fff8f0"></div>
<div style="position:absolute;left:40px;top:222px;font-size:12px;transform:scaleX(0.87);transform-origin:0 0;color:#4a0000;white-space:nowrap;letter-spacing:-0.05px;">2007-09-03</div>
<div style="position:absolute;left:100px;top:222px;width:1px;height:20px;background:#fff8f0"></div>
<div style="position:absolute;left:104px;top:222px;font-size:12px;transform:scaleX(0.87);transform-origin:0 0;color:#4a0000;white-space:nowrap;letter-spacing:-0.45px;">C0002</div>
<div style="position:absolute;left:158px;top:222px;width:1px;height:20px;background:#fff8f0"></div>
<div style="position:absolute;left:162px;top:222px;font-size:12px;transform:scaleX(0.87);transform-origin:0 0;color:#4a0000;white-space:nowrap;">Csirke mellfilé eh.</div>
<div style="position:absolute;left:269px;top:222px;width:1px;height:20px;background:#fff8f0"></div>
<div style="position:absolute;left:270px;top:222px;width:39px;text-align:right;font-size:12px;transform:scaleX(0.87);transform-origin:100% 0;color:#4a0000;white-space:nowrap;letter-spacing:-0.05px;">10002</div>
<div style="position:absolute;left:311px;top:222px;width:1px;height:20px;background:#fff8f0"></div>
<div style="position:absolute;left:315px;top:222px;font-size:12px;transform:scaleX(0.87);transform-origin:0 0;color:#4a0000;white-space:nowrap;">KG</div>
<div style="position:absolute;left:349px;top:222px;width:1px;height:20px;background:#fff8f0"></div>
<div style="position:absolute;left:350px;top:222px;width:57px;text-align:right;font-size:12px;transform:scaleX(0.87);transform-origin:100% 0;color:#4a0000;white-space:nowrap;letter-spacing:-0.05px;">0</div>
<div style="position:absolute;left:409px;top:222px;width:1px;height:20px;background:#fff8f0"></div>
<div style="position:absolute;left:410px;top:222px;width:66px;text-align:right;font-size:12px;transform:scaleX(0.87);transform-origin:100% 0;color:#4a0000;white-space:nowrap;letter-spacing:-0.05px;">0</div>
<div style="position:absolute;left:478px;top:222px;width:1px;height:20px;background:#fff8f0"></div>
<div style="position:absolute;left:479px;top:222px;width:107px;text-align:right;font-size:12px;transform:scaleX(0.87);transform-origin:100% 0;color:#4a0000;white-space:nowrap;letter-spacing:-0.05px;">712</div>
<div style="position:absolute;left:588px;top:222px;width:1px;height:20px;background:#fff8f0"></div>
<div style="position:absolute;left:589px;top:222px;width:88px;text-align:right;font-size:12px;transform:scaleX(0.87);transform-origin:100% 0;color:#4a0000;white-space:nowrap;letter-spacing:-0.05px;">10 680</div>
<div style="position:absolute;left:679px;top:222px;width:1px;height:20px;background:#fff8f0"></div>
<div style="position:absolute;left:680px;top:222px;width:110px;text-align:right;font-size:12px;transform:scaleX(0.87);transform-origin:100% 0;color:#4a0000;white-space:nowrap;letter-spacing:-0.05px;">0</div>
<div style="position:absolute;left:792px;top:222px;width:1px;height:20px;background:#fff8f0"></div>
<div style="position:absolute;left:885px;top:222px;width:1px;height:20px;background:#fff8f0"></div>
<div style="position:absolute;left:7px;top:242px;width:30px;height:20px;box-sizing:border-box;background:#ada9da;border-top:1px solid #e4e2f6;border-left:1px solid #e4e2f6;border-bottom:1px solid #1c1848;border-right:1px solid #1c1848;box-shadow:inset -1px -1px 0 #7c78b4;"><div style="position:absolute;left:4px;top:2px;font-size:12px;transform:scaleX(0.87);transform-origin:0 0;line-height:13px;">6</div></div>
<div style="position:absolute;left:37px;top:242px;width:886px;height:20px;background:#ff0000"></div>
<div style="position:absolute;left:36px;top:242px;width:1px;height:20px;background:#fff8f0"></div>
<div style="position:absolute;left:40px;top:242px;font-size:12px;transform:scaleX(0.87);transform-origin:0 0;color:#4a0000;white-space:nowrap;letter-spacing:-0.05px;">2007-09-04</div>
<div style="position:absolute;left:100px;top:242px;width:1px;height:20px;background:#fff8f0"></div>
<div style="position:absolute;left:104px;top:242px;font-size:12px;transform:scaleX(0.87);transform-origin:0 0;color:#4a0000;white-space:nowrap;letter-spacing:-0.45px;">C0002</div>
<div style="position:absolute;left:158px;top:242px;width:1px;height:20px;background:#fff8f0"></div>
<div style="position:absolute;left:162px;top:242px;font-size:12px;transform:scaleX(0.87);transform-origin:0 0;color:#4a0000;white-space:nowrap;">Csirke mellfilé eh.</div>
<div style="position:absolute;left:269px;top:242px;width:1px;height:20px;background:#fff8f0"></div>
<div style="position:absolute;left:270px;top:242px;width:39px;text-align:right;font-size:12px;transform:scaleX(0.87);transform-origin:100% 0;color:#4a0000;white-space:nowrap;letter-spacing:-0.05px;">10002</div>
<div style="position:absolute;left:311px;top:242px;width:1px;height:20px;background:#fff8f0"></div>
<div style="position:absolute;left:315px;top:242px;font-size:12px;transform:scaleX(0.87);transform-origin:0 0;color:#4a0000;white-space:nowrap;">KG</div>
<div style="position:absolute;left:349px;top:242px;width:1px;height:20px;background:#fff8f0"></div>
<div style="position:absolute;left:350px;top:242px;width:57px;text-align:right;font-size:12px;transform:scaleX(0.87);transform-origin:100% 0;color:#4a0000;white-space:nowrap;letter-spacing:-0.05px;">0</div>
<div style="position:absolute;left:409px;top:242px;width:1px;height:20px;background:#fff8f0"></div>
<div style="position:absolute;left:410px;top:242px;width:66px;text-align:right;font-size:12px;transform:scaleX(0.87);transform-origin:100% 0;color:#4a0000;white-space:nowrap;letter-spacing:-0.05px;">0</div>
<div style="position:absolute;left:478px;top:242px;width:1px;height:20px;background:#fff8f0"></div>
<div style="position:absolute;left:479px;top:242px;width:107px;text-align:right;font-size:12px;transform:scaleX(0.87);transform-origin:100% 0;color:#4a0000;white-space:nowrap;letter-spacing:-0.05px;">712</div>
<div style="position:absolute;left:588px;top:242px;width:1px;height:20px;background:#fff8f0"></div>
<div style="position:absolute;left:589px;top:242px;width:88px;text-align:right;font-size:12px;transform:scaleX(0.87);transform-origin:100% 0;color:#4a0000;white-space:nowrap;letter-spacing:-0.05px;">53 400</div>
<div style="position:absolute;left:679px;top:242px;width:1px;height:20px;background:#fff8f0"></div>
<div style="position:absolute;left:680px;top:242px;width:110px;text-align:right;font-size:12px;transform:scaleX(0.87);transform-origin:100% 0;color:#4a0000;white-space:nowrap;letter-spacing:-0.05px;">0</div>
<div style="position:absolute;left:792px;top:242px;width:1px;height:20px;background:#fff8f0"></div>
<div style="position:absolute;left:885px;top:242px;width:1px;height:20px;background:#fff8f0"></div>
<div style="position:absolute;left:7px;top:262px;width:30px;height:20px;box-sizing:border-box;background:#ada9da;border-top:1px solid #e4e2f6;border-left:1px solid #e4e2f6;border-bottom:1px solid #1c1848;border-right:1px solid #1c1848;box-shadow:inset -1px -1px 0 #7c78b4;"><div style="position:absolute;left:4px;top:2px;font-size:12px;transform:scaleX(0.87);transform-origin:0 0;line-height:13px;">7</div></div>
<div style="position:absolute;left:37px;top:262px;width:886px;height:20px;background:#ff0000"></div>
<div style="position:absolute;left:36px;top:262px;width:1px;height:20px;background:#fff8f0"></div>
<div style="position:absolute;left:40px;top:262px;font-size:12px;transform:scaleX(0.87);transform-origin:0 0;color:#4a0000;white-space:nowrap;letter-spacing:-0.05px;">2007-09-25</div>
<div style="position:absolute;left:100px;top:262px;width:1px;height:20px;background:#fff8f0"></div>
<div style="position:absolute;left:104px;top:262px;font-size:12px;transform:scaleX(0.87);transform-origin:0 0;color:#4a0000;white-space:nowrap;letter-spacing:-0.45px;">C0003</div>
<div style="position:absolute;left:158px;top:262px;width:1px;height:20px;background:#fff8f0"></div>
<div style="position:absolute;left:162px;top:262px;font-size:12px;transform:scaleX(0.87);transform-origin:0 0;color:#4a0000;white-space:nowrap;">Csirke mellfilé "B" eh.</div>
<div style="position:absolute;left:269px;top:262px;width:1px;height:20px;background:#fff8f0"></div>
<div style="position:absolute;left:270px;top:262px;width:39px;text-align:right;font-size:12px;transform:scaleX(0.87);transform-origin:100% 0;color:#4a0000;white-space:nowrap;letter-spacing:-0.05px;">10003</div>
<div style="position:absolute;left:311px;top:262px;width:1px;height:20px;background:#fff8f0"></div>
<div style="position:absolute;left:315px;top:262px;font-size:12px;transform:scaleX(0.87);transform-origin:0 0;color:#4a0000;white-space:nowrap;">KG</div>
<div style="position:absolute;left:349px;top:262px;width:1px;height:20px;background:#fff8f0"></div>
<div style="position:absolute;left:350px;top:262px;width:57px;text-align:right;font-size:12px;transform:scaleX(0.87);transform-origin:100% 0;color:#4a0000;white-space:nowrap;letter-spacing:-0.05px;">680</div>
<div style="position:absolute;left:409px;top:262px;width:1px;height:20px;background:#fff8f0"></div>
<div style="position:absolute;left:410px;top:262px;width:66px;text-align:right;font-size:12px;transform:scaleX(0.87);transform-origin:100% 0;color:#4a0000;white-space:nowrap;letter-spacing:-0.05px;">102 000</div>
<div style="position:absolute;left:478px;top:262px;width:1px;height:20px;background:#fff8f0"></div>
<div style="position:absolute;left:479px;top:262px;width:107px;text-align:right;font-size:12px;transform:scaleX(0.87);transform-origin:100% 0;color:#4a0000;white-space:nowrap;letter-spacing:-0.05px;">680</div>
<div style="position:absolute;left:588px;top:262px;width:1px;height:20px;background:#fff8f0"></div>
<div style="position:absolute;left:589px;top:262px;width:88px;text-align:right;font-size:12px;transform:scaleX(0.87);transform-origin:100% 0;color:#4a0000;white-space:nowrap;letter-spacing:-0.05px;">102 000</div>
<div style="position:absolute;left:679px;top:262px;width:1px;height:20px;background:#fff8f0"></div>
<div style="position:absolute;left:680px;top:262px;width:110px;text-align:right;font-size:12px;transform:scaleX(0.87);transform-origin:100% 0;color:#4a0000;white-space:nowrap;letter-spacing:-0.05px;">0</div>
<div style="position:absolute;left:792px;top:262px;width:1px;height:20px;background:#fff8f0"></div>
<div style="position:absolute;left:885px;top:262px;width:1px;height:20px;background:#fff8f0"></div>
<div style="position:absolute;left:7px;top:282px;width:30px;height:20px;box-sizing:border-box;background:#ada9da;border-top:1px solid #e4e2f6;border-left:1px solid #e4e2f6;border-bottom:1px solid #1c1848;border-right:1px solid #1c1848;box-shadow:inset -1px -1px 0 #7c78b4;"><div style="position:absolute;left:4px;top:2px;font-size:12px;transform:scaleX(0.87);transform-origin:0 0;line-height:13px;">8</div></div>
<div style="position:absolute;left:37px;top:282px;width:886px;height:20px;background:#9a9af8"></div>
<div style="position:absolute;left:36px;top:282px;width:1px;height:20px;background:#fff8f0"></div>
<div style="position:absolute;left:40px;top:282px;font-size:12px;transform:scaleX(0.87);transform-origin:0 0;color:#000038;white-space:nowrap;letter-spacing:-0.05px;">2007-09-18</div>
<div style="position:absolute;left:100px;top:282px;width:1px;height:20px;background:#fff8f0"></div>
<div style="position:absolute;left:104px;top:282px;font-size:12px;transform:scaleX(0.87);transform-origin:0 0;color:#000038;white-space:nowrap;letter-spacing:-0.45px;">C0001</div>
<div style="position:absolute;left:158px;top:282px;width:1px;height:20px;background:#fff8f0"></div>
<div style="position:absolute;left:162px;top:282px;font-size:12px;transform:scaleX(0.87);transform-origin:0 0;color:#000038;white-space:nowrap;">Csirke mell</div>
<div style="position:absolute;left:269px;top:282px;width:1px;height:20px;background:#fff8f0"></div>
<div style="position:absolute;left:270px;top:282px;width:39px;text-align:right;font-size:12px;transform:scaleX(0.87);transform-origin:100% 0;color:#000038;white-space:nowrap;letter-spacing:-0.05px;">10001</div>
<div style="position:absolute;left:311px;top:282px;width:1px;height:20px;background:#fff8f0"></div>
<div style="position:absolute;left:315px;top:282px;font-size:12px;transform:scaleX(0.87);transform-origin:0 0;color:#000038;white-space:nowrap;">KG</div>
<div style="position:absolute;left:349px;top:282px;width:1px;height:20px;background:#fff8f0"></div>
<div style="position:absolute;left:350px;top:282px;width:57px;text-align:right;font-size:12px;transform:scaleX(0.87);transform-origin:100% 0;color:#000038;white-space:nowrap;letter-spacing:-0.05px;">2</div>
<div style="position:absolute;left:409px;top:282px;width:1px;height:20px;background:#fff8f0"></div>
<div style="position:absolute;left:410px;top:282px;width:66px;text-align:right;font-size:12px;transform:scaleX(0.87);transform-origin:100% 0;color:#000038;white-space:nowrap;letter-spacing:-0.05px;">30</div>
<div style="position:absolute;left:478px;top:282px;width:1px;height:20px;background:#fff8f0"></div>
<div style="position:absolute;left:588px;top:282px;width:1px;height:20px;background:#fff8f0"></div>
<div style="position:absolute;left:679px;top:282px;width:1px;height:20px;background:#fff8f0"></div>
<div style="position:absolute;left:680px;top:282px;width:110px;text-align:right;font-size:12px;transform:scaleX(0.87);transform-origin:100% 0;color:#000038;white-space:nowrap;letter-spacing:-0.05px;">0</div>
<div style="position:absolute;left:792px;top:282px;width:1px;height:20px;background:#fff8f0"></div>
<div style="position:absolute;left:885px;top:282px;width:1px;height:20px;background:#fff8f0"></div>
<div style="position:absolute;left:7px;top:302px;width:30px;height:20px;box-sizing:border-box;background:#ada9da;border-top:1px solid #e4e2f6;border-left:1px solid #e4e2f6;border-bottom:1px solid #1c1848;border-right:1px solid #1c1848;box-shadow:inset -1px -1px 0 #7c78b4;"><div style="position:absolute;left:4px;top:2px;font-size:12px;transform:scaleX(0.87);transform-origin:0 0;line-height:13px;">9</div></div>
<div style="position:absolute;left:37px;top:302px;width:886px;height:20px;background:#f0a010"></div>
<div style="position:absolute;left:36px;top:302px;width:1px;height:20px;background:#fff8f0"></div>
<div style="position:absolute;left:40px;top:302px;font-size:12px;transform:scaleX(0.87);transform-origin:0 0;color:#180000;white-space:nowrap;letter-spacing:-0.05px;">2007-09-18</div>
<div style="position:absolute;left:100px;top:302px;width:1px;height:20px;background:#fff8f0"></div>
<div style="position:absolute;left:104px;top:302px;font-size:12px;transform:scaleX(0.87);transform-origin:0 0;color:#180000;white-space:nowrap;letter-spacing:-0.45px;">C0001</div>
<div style="position:absolute;left:158px;top:302px;width:1px;height:20px;background:#fff8f0"></div>
<div style="position:absolute;left:162px;top:302px;font-size:12px;transform:scaleX(0.87);transform-origin:0 0;color:#180000;white-space:nowrap;">Csirke mell</div>
<div style="position:absolute;left:269px;top:302px;width:1px;height:20px;background:#fff8f0"></div>
<div style="position:absolute;left:270px;top:302px;width:39px;text-align:right;font-size:12px;transform:scaleX(0.87);transform-origin:100% 0;color:#180000;white-space:nowrap;letter-spacing:-0.05px;">10001</div>
<div style="position:absolute;left:311px;top:302px;width:1px;height:20px;background:#fff8f0"></div>
<div style="position:absolute;left:315px;top:302px;font-size:12px;transform:scaleX(0.87);transform-origin:0 0;color:#180000;white-space:nowrap;">KG</div>
<div style="position:absolute;left:349px;top:302px;width:1px;height:20px;background:#fff8f0"></div>
<div style="position:absolute;left:350px;top:302px;width:57px;text-align:right;font-size:12px;transform:scaleX(0.87);transform-origin:100% 0;color:#180000;white-space:nowrap;letter-spacing:-0.05px;">380</div>
<div style="position:absolute;left:409px;top:302px;width:1px;height:20px;background:#fff8f0"></div>
<div style="position:absolute;left:410px;top:302px;width:66px;text-align:right;font-size:12px;transform:scaleX(0.87);transform-origin:100% 0;color:#180000;white-space:nowrap;letter-spacing:-0.05px;">85 500</div>
<div style="position:absolute;left:478px;top:302px;width:1px;height:20px;background:#fff8f0"></div>
<div style="position:absolute;left:479px;top:302px;width:107px;text-align:right;font-size:12px;transform:scaleX(0.87);transform-origin:100% 0;color:#180000;white-space:nowrap;letter-spacing:-0.05px;">365</div>
<div style="position:absolute;left:588px;top:302px;width:1px;height:20px;background:#fff8f0"></div>
<div style="position:absolute;left:589px;top:302px;width:88px;text-align:right;font-size:12px;transform:scaleX(0.87);transform-origin:100% 0;color:#180000;white-space:nowrap;letter-spacing:-0.05px;">82 125</div>
<div style="position:absolute;left:679px;top:302px;width:1px;height:20px;background:#fff8f0"></div>
<div style="position:absolute;left:680px;top:302px;width:110px;text-align:right;font-size:12px;transform:scaleX(0.87);transform-origin:100% 0;color:#180000;white-space:nowrap;letter-spacing:-0.05px;">380</div>
<div style="position:absolute;left:792px;top:302px;width:1px;height:20px;background:#fff8f0"></div>
<div style="position:absolute;left:793px;top:302px;width:90px;text-align:right;font-size:12px;transform:scaleX(0.87);transform-origin:100% 0;color:#180000;white-space:nowrap;letter-spacing:-0.05px;">85 500</div>
<div style="position:absolute;left:885px;top:302px;width:1px;height:20px;background:#fff8f0"></div>
<div style="position:absolute;left:7px;top:322px;width:30px;height:20px;box-sizing:border-box;background:#ada9da;border-top:1px solid #e4e2f6;border-left:1px solid #e4e2f6;border-bottom:1px solid #1c1848;border-right:1px solid #1c1848;box-shadow:inset -1px -1px 0 #7c78b4;"><div style="position:absolute;left:4px;top:2px;font-size:12px;transform:scaleX(0.87);transform-origin:0 0;line-height:13px;">10</div></div>
<div style="position:absolute;left:37px;top:322px;width:886px;height:20px;background:#ff0000"></div>
<div style="position:absolute;left:36px;top:322px;width:1px;height:20px;background:#fff8f0"></div>
<div style="position:absolute;left:40px;top:322px;font-size:12px;transform:scaleX(0.87);transform-origin:0 0;color:#4a0000;white-space:nowrap;letter-spacing:-0.05px;">2007-09-12</div>
<div style="position:absolute;left:100px;top:322px;width:1px;height:20px;background:#fff8f0"></div>
<div style="position:absolute;left:104px;top:322px;font-size:12px;transform:scaleX(0.87);transform-origin:0 0;color:#4a0000;white-space:nowrap;letter-spacing:-0.45px;">C0001</div>
<div style="position:absolute;left:158px;top:322px;width:1px;height:20px;background:#fff8f0"></div>
<div style="position:absolute;left:162px;top:322px;font-size:12px;transform:scaleX(0.87);transform-origin:0 0;color:#4a0000;white-space:nowrap;">Csirke mell</div>
<div style="position:absolute;left:269px;top:322px;width:1px;height:20px;background:#fff8f0"></div>
<div style="position:absolute;left:270px;top:322px;width:39px;text-align:right;font-size:12px;transform:scaleX(0.87);transform-origin:100% 0;color:#4a0000;white-space:nowrap;letter-spacing:-0.05px;">10001</div>
<div style="position:absolute;left:311px;top:322px;width:1px;height:20px;background:#fff8f0"></div>
<div style="position:absolute;left:315px;top:322px;font-size:12px;transform:scaleX(0.87);transform-origin:0 0;color:#4a0000;white-space:nowrap;">KG</div>
<div style="position:absolute;left:349px;top:322px;width:1px;height:20px;background:#fff8f0"></div>
<div style="position:absolute;left:350px;top:322px;width:57px;text-align:right;font-size:12px;transform:scaleX(0.87);transform-origin:100% 0;color:#4a0000;white-space:nowrap;letter-spacing:-0.05px;">380</div>
<div style="position:absolute;left:409px;top:322px;width:1px;height:20px;background:#fff8f0"></div>
<div style="position:absolute;left:410px;top:322px;width:66px;text-align:right;font-size:12px;transform:scaleX(0.87);transform-origin:100% 0;color:#4a0000;white-space:nowrap;letter-spacing:-0.05px;">11 400</div>
<div style="position:absolute;left:478px;top:322px;width:1px;height:20px;background:#fff8f0"></div>
<div style="position:absolute;left:479px;top:322px;width:107px;text-align:right;font-size:12px;transform:scaleX(0.87);transform-origin:100% 0;color:#4a0000;white-space:nowrap;letter-spacing:-0.05px;">365</div>
<div style="position:absolute;left:588px;top:322px;width:1px;height:20px;background:#fff8f0"></div>
<div style="position:absolute;left:589px;top:322px;width:88px;text-align:right;font-size:12px;transform:scaleX(0.87);transform-origin:100% 0;color:#4a0000;white-space:nowrap;letter-spacing:-0.05px;">10 950</div>
<div style="position:absolute;left:679px;top:322px;width:1px;height:20px;background:#fff8f0"></div>
<div style="position:absolute;left:680px;top:322px;width:110px;text-align:right;font-size:12px;transform:scaleX(0.87);transform-origin:100% 0;color:#4a0000;white-space:nowrap;letter-spacing:-0.05px;">0</div>
<div style="position:absolute;left:792px;top:322px;width:1px;height:20px;background:#fff8f0"></div>
<div style="position:absolute;left:885px;top:322px;width:1px;height:20px;background:#fff8f0"></div>
<div style="position:absolute;left:7px;top:342px;width:30px;height:20px;box-sizing:border-box;background:#ada9da;border-top:1px solid #e4e2f6;border-left:1px solid #e4e2f6;border-bottom:1px solid #1c1848;border-right:1px solid #1c1848;box-shadow:inset -1px -1px 0 #7c78b4;"><div style="position:absolute;left:4px;top:2px;font-size:12px;transform:scaleX(0.87);transform-origin:0 0;line-height:13px;">11</div></div>
<div style="position:absolute;left:37px;top:342px;width:886px;height:20px;background:#ff0000"></div>
<div style="position:absolute;left:36px;top:342px;width:1px;height:20px;background:#fff8f0"></div>
<div style="position:absolute;left:40px;top:342px;font-size:12px;transform:scaleX(0.87);transform-origin:0 0;color:#4a0000;white-space:nowrap;letter-spacing:-0.05px;">2007-09-04</div>
<div style="position:absolute;left:100px;top:342px;width:1px;height:20px;background:#fff8f0"></div>
<div style="position:absolute;left:104px;top:342px;font-size:12px;transform:scaleX(0.87);transform-origin:0 0;color:#4a0000;white-space:nowrap;letter-spacing:-0.45px;">C0001</div>
<div style="position:absolute;left:158px;top:342px;width:1px;height:20px;background:#fff8f0"></div>
<div style="position:absolute;left:162px;top:342px;font-size:12px;transform:scaleX(0.87);transform-origin:0 0;color:#4a0000;white-space:nowrap;">Csirke mell</div>
<div style="position:absolute;left:269px;top:342px;width:1px;height:20px;background:#fff8f0"></div>
<div style="position:absolute;left:270px;top:342px;width:39px;text-align:right;font-size:12px;transform:scaleX(0.87);transform-origin:100% 0;color:#4a0000;white-space:nowrap;letter-spacing:-0.05px;">10001</div>
<div style="position:absolute;left:311px;top:342px;width:1px;height:20px;background:#fff8f0"></div>
<div style="position:absolute;left:315px;top:342px;font-size:12px;transform:scaleX(0.87);transform-origin:0 0;color:#4a0000;white-space:nowrap;">KG</div>
<div style="position:absolute;left:349px;top:342px;width:1px;height:20px;background:#fff8f0"></div>
<div style="position:absolute;left:350px;top:342px;width:57px;text-align:right;font-size:12px;transform:scaleX(0.87);transform-origin:100% 0;color:#4a0000;white-space:nowrap;letter-spacing:-0.05px;">0</div>
<div style="position:absolute;left:409px;top:342px;width:1px;height:20px;background:#fff8f0"></div>
<div style="position:absolute;left:410px;top:342px;width:66px;text-align:right;font-size:12px;transform:scaleX(0.87);transform-origin:100% 0;color:#4a0000;white-space:nowrap;letter-spacing:-0.05px;">0</div>
<div style="position:absolute;left:478px;top:342px;width:1px;height:20px;background:#fff8f0"></div>
<div style="position:absolute;left:479px;top:342px;width:107px;text-align:right;font-size:12px;transform:scaleX(0.87);transform-origin:100% 0;color:#4a0000;white-space:nowrap;letter-spacing:-0.05px;">365</div>
<div style="position:absolute;left:588px;top:342px;width:1px;height:20px;background:#fff8f0"></div>
<div style="position:absolute;left:589px;top:342px;width:88px;text-align:right;font-size:12px;transform:scaleX(0.87);transform-origin:100% 0;color:#4a0000;white-space:nowrap;letter-spacing:-0.05px;">5 475</div>
<div style="position:absolute;left:679px;top:342px;width:1px;height:20px;background:#fff8f0"></div>
<div style="position:absolute;left:680px;top:342px;width:110px;text-align:right;font-size:12px;transform:scaleX(0.87);transform-origin:100% 0;color:#4a0000;white-space:nowrap;letter-spacing:-0.05px;">0</div>
<div style="position:absolute;left:792px;top:342px;width:1px;height:20px;background:#fff8f0"></div>
<div style="position:absolute;left:885px;top:342px;width:1px;height:20px;background:#fff8f0"></div>
<div style="position:absolute;left:7px;top:362px;width:30px;height:20px;box-sizing:border-box;background:#ada9da;border-top:1px solid #e4e2f6;border-left:1px solid #e4e2f6;border-bottom:1px solid #1c1848;border-right:1px solid #1c1848;box-shadow:inset -1px -1px 0 #7c78b4;"><div style="position:absolute;left:4px;top:2px;font-size:12px;transform:scaleX(0.87);transform-origin:0 0;line-height:13px;">12</div></div>
<div style="position:absolute;left:37px;top:362px;width:886px;height:20px;background:#ff0000"></div>
<div style="position:absolute;left:36px;top:362px;width:1px;height:20px;background:#fff8f0"></div>
<div style="position:absolute;left:40px;top:362px;font-size:12px;transform:scaleX(0.87);transform-origin:0 0;color:#4a0000;white-space:nowrap;letter-spacing:-0.05px;">2007-09-05</div>
<div style="position:absolute;left:100px;top:362px;width:1px;height:20px;background:#fff8f0"></div>
<div style="position:absolute;left:104px;top:362px;font-size:12px;transform:scaleX(0.87);transform-origin:0 0;color:#4a0000;white-space:nowrap;letter-spacing:-0.45px;">C0001</div>
<div style="position:absolute;left:158px;top:362px;width:1px;height:20px;background:#fff8f0"></div>
<div style="position:absolute;left:162px;top:362px;font-size:12px;transform:scaleX(0.87);transform-origin:0 0;color:#4a0000;white-space:nowrap;">Csirke mell</div>
<div style="position:absolute;left:269px;top:362px;width:1px;height:20px;background:#fff8f0"></div>
<div style="position:absolute;left:270px;top:362px;width:39px;text-align:right;font-size:12px;transform:scaleX(0.87);transform-origin:100% 0;color:#4a0000;white-space:nowrap;letter-spacing:-0.05px;">10001</div>
<div style="position:absolute;left:311px;top:362px;width:1px;height:20px;background:#fff8f0"></div>
<div style="position:absolute;left:315px;top:362px;font-size:12px;transform:scaleX(0.87);transform-origin:0 0;color:#4a0000;white-space:nowrap;">KG</div>
<div style="position:absolute;left:349px;top:362px;width:1px;height:20px;background:#fff8f0"></div>
<div style="position:absolute;left:350px;top:362px;width:57px;text-align:right;font-size:12px;transform:scaleX(0.87);transform-origin:100% 0;color:#4a0000;white-space:nowrap;letter-spacing:-0.05px;">0</div>
<div style="position:absolute;left:409px;top:362px;width:1px;height:20px;background:#fff8f0"></div>
<div style="position:absolute;left:410px;top:362px;width:66px;text-align:right;font-size:12px;transform:scaleX(0.87);transform-origin:100% 0;color:#4a0000;white-space:nowrap;letter-spacing:-0.05px;">0</div>
<div style="position:absolute;left:478px;top:362px;width:1px;height:20px;background:#fff8f0"></div>
<div style="position:absolute;left:479px;top:362px;width:107px;text-align:right;font-size:12px;transform:scaleX(0.87);transform-origin:100% 0;color:#4a0000;white-space:nowrap;letter-spacing:-0.05px;">365</div>
<div style="position:absolute;left:588px;top:362px;width:1px;height:20px;background:#fff8f0"></div>
<div style="position:absolute;left:589px;top:362px;width:88px;text-align:right;font-size:12px;transform:scaleX(0.87);transform-origin:100% 0;color:#4a0000;white-space:nowrap;letter-spacing:-0.05px;">16 425</div>
<div style="position:absolute;left:679px;top:362px;width:1px;height:20px;background:#fff8f0"></div>
<div style="position:absolute;left:680px;top:362px;width:110px;text-align:right;font-size:12px;transform:scaleX(0.87);transform-origin:100% 0;color:#4a0000;white-space:nowrap;letter-spacing:-0.05px;">0</div>
<div style="position:absolute;left:792px;top:362px;width:1px;height:20px;background:#fff8f0"></div>
<div style="position:absolute;left:885px;top:362px;width:1px;height:20px;background:#fff8f0"></div>
<div style="position:absolute;left:7px;top:382px;width:30px;height:20px;box-sizing:border-box;background:#ada9da;border-top:1px solid #e4e2f6;border-left:1px solid #e4e2f6;border-bottom:1px solid #1c1848;border-right:1px solid #1c1848;box-shadow:inset -1px -1px 0 #7c78b4;"><div style="position:absolute;left:4px;top:2px;font-size:12px;transform:scaleX(0.87);transform-origin:0 0;line-height:13px;">13</div></div>
<div style="position:absolute;left:37px;top:382px;width:886px;height:20px;background:#ff0000"></div>
<div style="position:absolute;left:36px;top:382px;width:1px;height:20px;background:#fff8f0"></div>
<div style="position:absolute;left:40px;top:382px;font-size:12px;transform:scaleX(0.87);transform-origin:0 0;color:#4a0000;white-space:nowrap;letter-spacing:-0.05px;">2007-09-07</div>
<div style="position:absolute;left:100px;top:382px;width:1px;height:20px;background:#fff8f0"></div>
<div style="position:absolute;left:104px;top:382px;font-size:12px;transform:scaleX(0.87);transform-origin:0 0;color:#4a0000;white-space:nowrap;letter-spacing:-0.45px;">C0001</div>
<div style="position:absolute;left:158px;top:382px;width:1px;height:20px;background:#fff8f0"></div>
<div style="position:absolute;left:162px;top:382px;font-size:12px;transform:scaleX(0.87);transform-origin:0 0;color:#4a0000;white-space:nowrap;">Csirke mell</div>
<div style="position:absolute;left:269px;top:382px;width:1px;height:20px;background:#fff8f0"></div>
<div style="position:absolute;left:270px;top:382px;width:39px;text-align:right;font-size:12px;transform:scaleX(0.87);transform-origin:100% 0;color:#4a0000;white-space:nowrap;letter-spacing:-0.05px;">10001</div>
<div style="position:absolute;left:311px;top:382px;width:1px;height:20px;background:#fff8f0"></div>
<div style="position:absolute;left:315px;top:382px;font-size:12px;transform:scaleX(0.87);transform-origin:0 0;color:#4a0000;white-space:nowrap;">KG</div>
<div style="position:absolute;left:349px;top:382px;width:1px;height:20px;background:#fff8f0"></div>
<div style="position:absolute;left:350px;top:382px;width:57px;text-align:right;font-size:12px;transform:scaleX(0.87);transform-origin:100% 0;color:#4a0000;white-space:nowrap;letter-spacing:-0.05px;">0</div>
<div style="position:absolute;left:409px;top:382px;width:1px;height:20px;background:#fff8f0"></div>
<div style="position:absolute;left:410px;top:382px;width:66px;text-align:right;font-size:12px;transform:scaleX(0.87);transform-origin:100% 0;color:#4a0000;white-space:nowrap;letter-spacing:-0.05px;">0</div>
<div style="position:absolute;left:478px;top:382px;width:1px;height:20px;background:#fff8f0"></div>
<div style="position:absolute;left:479px;top:382px;width:107px;text-align:right;font-size:12px;transform:scaleX(0.87);transform-origin:100% 0;color:#4a0000;white-space:nowrap;letter-spacing:-0.05px;">365</div>
<div style="position:absolute;left:588px;top:382px;width:1px;height:20px;background:#fff8f0"></div>
<div style="position:absolute;left:589px;top:382px;width:88px;text-align:right;font-size:12px;transform:scaleX(0.87);transform-origin:100% 0;color:#4a0000;white-space:nowrap;letter-spacing:-0.05px;">10 950</div>
<div style="position:absolute;left:679px;top:382px;width:1px;height:20px;background:#fff8f0"></div>
<div style="position:absolute;left:680px;top:382px;width:110px;text-align:right;font-size:12px;transform:scaleX(0.87);transform-origin:100% 0;color:#4a0000;white-space:nowrap;letter-spacing:-0.05px;">0</div>
<div style="position:absolute;left:792px;top:382px;width:1px;height:20px;background:#fff8f0"></div>
<div style="position:absolute;left:885px;top:382px;width:1px;height:20px;background:#fff8f0"></div>
<div style="position:absolute;left:7px;top:402px;width:30px;height:20px;box-sizing:border-box;background:#ada9da;border-top:1px solid #e4e2f6;border-left:1px solid #e4e2f6;border-bottom:1px solid #1c1848;border-right:1px solid #1c1848;box-shadow:inset -1px -1px 0 #7c78b4;"><div style="position:absolute;left:4px;top:2px;font-size:12px;transform:scaleX(0.87);transform-origin:0 0;line-height:13px;">14</div></div>
<div style="position:absolute;left:37px;top:402px;width:886px;height:20px;background:#ff0000"></div>
<div style="position:absolute;left:36px;top:402px;width:1px;height:20px;background:#fff8f0"></div>
<div style="position:absolute;left:40px;top:402px;font-size:12px;transform:scaleX(0.87);transform-origin:0 0;color:#4a0000;white-space:nowrap;letter-spacing:-0.05px;">2007-09-10</div>
<div style="position:absolute;left:100px;top:402px;width:1px;height:20px;background:#fff8f0"></div>
<div style="position:absolute;left:104px;top:402px;font-size:12px;transform:scaleX(0.87);transform-origin:0 0;color:#4a0000;white-space:nowrap;letter-spacing:-0.45px;">C0001</div>
<div style="position:absolute;left:158px;top:402px;width:1px;height:20px;background:#fff8f0"></div>
<div style="position:absolute;left:162px;top:402px;font-size:12px;transform:scaleX(0.87);transform-origin:0 0;color:#4a0000;white-space:nowrap;">Csirke mell</div>
<div style="position:absolute;left:269px;top:402px;width:1px;height:20px;background:#fff8f0"></div>
<div style="position:absolute;left:270px;top:402px;width:39px;text-align:right;font-size:12px;transform:scaleX(0.87);transform-origin:100% 0;color:#4a0000;white-space:nowrap;letter-spacing:-0.05px;">10001</div>
<div style="position:absolute;left:311px;top:402px;width:1px;height:20px;background:#fff8f0"></div>
<div style="position:absolute;left:315px;top:402px;font-size:12px;transform:scaleX(0.87);transform-origin:0 0;color:#4a0000;white-space:nowrap;">KG</div>
<div style="position:absolute;left:349px;top:402px;width:1px;height:20px;background:#fff8f0"></div>
<div style="position:absolute;left:350px;top:402px;width:57px;text-align:right;font-size:12px;transform:scaleX(0.87);transform-origin:100% 0;color:#4a0000;white-space:nowrap;letter-spacing:-0.05px;">380</div>
<div style="position:absolute;left:409px;top:402px;width:1px;height:20px;background:#fff8f0"></div>
<div style="position:absolute;left:410px;top:402px;width:66px;text-align:right;font-size:12px;transform:scaleX(0.87);transform-origin:100% 0;color:#4a0000;white-space:nowrap;letter-spacing:-0.05px;">11 400</div>
<div style="position:absolute;left:478px;top:402px;width:1px;height:20px;background:#fff8f0"></div>
<div style="position:absolute;left:479px;top:402px;width:107px;text-align:right;font-size:12px;transform:scaleX(0.87);transform-origin:100% 0;color:#4a0000;white-space:nowrap;letter-spacing:-0.05px;">365</div>
<div style="position:absolute;left:588px;top:402px;width:1px;height:20px;background:#fff8f0"></div>
<div style="position:absolute;left:589px;top:402px;width:88px;text-align:right;font-size:12px;transform:scaleX(0.87);transform-origin:100% 0;color:#4a0000;white-space:nowrap;letter-spacing:-0.05px;">10 950</div>
<div style="position:absolute;left:679px;top:402px;width:1px;height:20px;background:#fff8f0"></div>
<div style="position:absolute;left:680px;top:402px;width:110px;text-align:right;font-size:12px;transform:scaleX(0.87);transform-origin:100% 0;color:#4a0000;white-space:nowrap;letter-spacing:-0.05px;">0</div>
<div style="position:absolute;left:792px;top:402px;width:1px;height:20px;background:#fff8f0"></div>
<div style="position:absolute;left:885px;top:402px;width:1px;height:20px;background:#fff8f0"></div>
<div style="position:absolute;left:7px;top:422px;width:30px;height:20px;box-sizing:border-box;background:#ada9da;border-top:1px solid #e4e2f6;border-left:1px solid #e4e2f6;border-bottom:1px solid #1c1848;border-right:1px solid #1c1848;box-shadow:inset -1px -1px 0 #7c78b4;"><div style="position:absolute;left:4px;top:2px;font-size:12px;transform:scaleX(0.87);transform-origin:0 0;line-height:13px;">15</div></div>
<div style="position:absolute;left:37px;top:422px;width:886px;height:20px;background:#ff0000"></div>
<div style="position:absolute;left:36px;top:422px;width:1px;height:20px;background:#fff8f0"></div>
<div style="position:absolute;left:40px;top:422px;font-size:12px;transform:scaleX(0.87);transform-origin:0 0;color:#4a0000;white-space:nowrap;letter-spacing:-0.05px;">2007-09-03</div>
<div style="position:absolute;left:100px;top:422px;width:1px;height:20px;background:#fff8f0"></div>
<div style="position:absolute;left:104px;top:422px;font-size:12px;transform:scaleX(0.87);transform-origin:0 0;color:#4a0000;white-space:nowrap;letter-spacing:-0.45px;">C0001</div>
<div style="position:absolute;left:158px;top:422px;width:1px;height:20px;background:#fff8f0"></div>
<div style="position:absolute;left:162px;top:422px;font-size:12px;transform:scaleX(0.87);transform-origin:0 0;color:#4a0000;white-space:nowrap;">Csirke mell</div>
<div style="position:absolute;left:269px;top:422px;width:1px;height:20px;background:#fff8f0"></div>
<div style="position:absolute;left:270px;top:422px;width:39px;text-align:right;font-size:12px;transform:scaleX(0.87);transform-origin:100% 0;color:#4a0000;white-space:nowrap;letter-spacing:-0.05px;">10001</div>
<div style="position:absolute;left:311px;top:422px;width:1px;height:20px;background:#fff8f0"></div>
<div style="position:absolute;left:315px;top:422px;font-size:12px;transform:scaleX(0.87);transform-origin:0 0;color:#4a0000;white-space:nowrap;">KG</div>
<div style="position:absolute;left:349px;top:422px;width:1px;height:20px;background:#fff8f0"></div>
<div style="position:absolute;left:350px;top:422px;width:57px;text-align:right;font-size:12px;transform:scaleX(0.87);transform-origin:100% 0;color:#4a0000;white-space:nowrap;letter-spacing:-0.05px;">0</div>
<div style="position:absolute;left:409px;top:422px;width:1px;height:20px;background:#fff8f0"></div>
<div style="position:absolute;left:410px;top:422px;width:66px;text-align:right;font-size:12px;transform:scaleX(0.87);transform-origin:100% 0;color:#4a0000;white-space:nowrap;letter-spacing:-0.05px;">0</div>
<div style="position:absolute;left:478px;top:422px;width:1px;height:20px;background:#fff8f0"></div>
<div style="position:absolute;left:479px;top:422px;width:107px;text-align:right;font-size:12px;transform:scaleX(0.87);transform-origin:100% 0;color:#4a0000;white-space:nowrap;letter-spacing:-0.05px;">365</div>
<div style="position:absolute;left:588px;top:422px;width:1px;height:20px;background:#fff8f0"></div>
<div style="position:absolute;left:589px;top:422px;width:88px;text-align:right;font-size:12px;transform:scaleX(0.87);transform-origin:100% 0;color:#4a0000;white-space:nowrap;letter-spacing:-0.05px;">10 950</div>
<div style="position:absolute;left:679px;top:422px;width:1px;height:20px;background:#fff8f0"></div>
<div style="position:absolute;left:680px;top:422px;width:110px;text-align:right;font-size:12px;transform:scaleX(0.87);transform-origin:100% 0;color:#4a0000;white-space:nowrap;letter-spacing:-0.05px;">0</div>
<div style="position:absolute;left:792px;top:422px;width:1px;height:20px;background:#fff8f0"></div>
<div style="position:absolute;left:885px;top:422px;width:1px;height:20px;background:#fff8f0"></div>
<div style="position:absolute;left:7px;top:442px;width:30px;height:20px;box-sizing:border-box;background:#ada9da;border-top:1px solid #e4e2f6;border-left:1px solid #e4e2f6;border-bottom:1px solid #1c1848;border-right:1px solid #1c1848;box-shadow:inset -1px -1px 0 #7c78b4;"><div style="position:absolute;left:4px;top:2px;font-size:12px;transform:scaleX(0.87);transform-origin:0 0;line-height:13px;">16</div></div>
<div style="position:absolute;left:37px;top:442px;width:886px;height:20px;background:#ff0000"></div>
<div style="position:absolute;left:36px;top:442px;width:1px;height:20px;background:#fff8f0"></div>
<div style="position:absolute;left:40px;top:442px;font-size:12px;transform:scaleX(0.87);transform-origin:0 0;color:#4a0000;white-space:nowrap;letter-spacing:-0.05px;">2007-09-12</div>
<div style="position:absolute;left:100px;top:442px;width:1px;height:20px;background:#fff8f0"></div>
<div style="position:absolute;left:104px;top:442px;font-size:12px;transform:scaleX(0.87);transform-origin:0 0;color:#4a0000;white-space:nowrap;letter-spacing:-0.45px;">C0001</div>
<div style="position:absolute;left:158px;top:442px;width:1px;height:20px;background:#fff8f0"></div>
<div style="position:absolute;left:162px;top:442px;font-size:12px;transform:scaleX(0.87);transform-origin:0 0;color:#4a0000;white-space:nowrap;">Csirke mell</div>
<div style="position:absolute;left:269px;top:442px;width:1px;height:20px;background:#fff8f0"></div>
<div style="position:absolute;left:270px;top:442px;width:39px;text-align:right;font-size:12px;transform:scaleX(0.87);transform-origin:100% 0;color:#4a0000;white-space:nowrap;letter-spacing:-0.05px;">10001</div>
<div style="position:absolute;left:311px;top:442px;width:1px;height:20px;background:#fff8f0"></div>
<div style="position:absolute;left:315px;top:442px;font-size:12px;transform:scaleX(0.87);transform-origin:0 0;color:#4a0000;white-space:nowrap;">KG</div>
<div style="position:absolute;left:349px;top:442px;width:1px;height:20px;background:#fff8f0"></div>
<div style="position:absolute;left:350px;top:442px;width:57px;text-align:right;font-size:12px;transform:scaleX(0.87);transform-origin:100% 0;color:#4a0000;white-space:nowrap;letter-spacing:-0.05px;">380</div>
<div style="position:absolute;left:409px;top:442px;width:1px;height:20px;background:#fff8f0"></div>
<div style="position:absolute;left:410px;top:442px;width:66px;text-align:right;font-size:12px;transform:scaleX(0.87);transform-origin:100% 0;color:#4a0000;white-space:nowrap;letter-spacing:-0.05px;">57 000</div>
<div style="position:absolute;left:478px;top:442px;width:1px;height:20px;background:#fff8f0"></div>
<div style="position:absolute;left:479px;top:442px;width:107px;text-align:right;font-size:12px;transform:scaleX(0.87);transform-origin:100% 0;color:#4a0000;white-space:nowrap;letter-spacing:-0.05px;">365</div>
<div style="position:absolute;left:588px;top:442px;width:1px;height:20px;background:#fff8f0"></div>
<div style="position:absolute;left:589px;top:442px;width:88px;text-align:right;font-size:12px;transform:scaleX(0.87);transform-origin:100% 0;color:#4a0000;white-space:nowrap;letter-spacing:-0.05px;">54 750</div>
<div style="position:absolute;left:679px;top:442px;width:1px;height:20px;background:#fff8f0"></div>
<div style="position:absolute;left:680px;top:442px;width:110px;text-align:right;font-size:12px;transform:scaleX(0.87);transform-origin:100% 0;color:#4a0000;white-space:nowrap;letter-spacing:-0.05px;">0</div>
<div style="position:absolute;left:792px;top:442px;width:1px;height:20px;background:#fff8f0"></div>
<div style="position:absolute;left:885px;top:442px;width:1px;height:20px;background:#fff8f0"></div>
<div style="position:absolute;left:7px;top:462px;width:30px;height:20px;box-sizing:border-box;background:#ada9da;border-top:1px solid #e4e2f6;border-left:1px solid #e4e2f6;border-bottom:1px solid #1c1848;border-right:1px solid #1c1848;box-shadow:inset -1px -1px 0 #7c78b4;"><div style="position:absolute;left:4px;top:2px;font-size:12px;transform:scaleX(0.87);transform-origin:0 0;line-height:13px;">17</div></div>
<div style="position:absolute;left:37px;top:462px;width:886px;height:20px;background:#ff0000"></div>
<div style="position:absolute;left:36px;top:462px;width:1px;height:20px;background:#fff8f0"></div>
<div style="position:absolute;left:40px;top:462px;font-size:12px;transform:scaleX(0.87);transform-origin:0 0;color:#4a0000;white-space:nowrap;letter-spacing:-0.05px;">2007-09-12</div>
<div style="position:absolute;left:100px;top:462px;width:1px;height:20px;background:#fff8f0"></div>
<div style="position:absolute;left:104px;top:462px;font-size:12px;transform:scaleX(0.87);transform-origin:0 0;color:#4a0000;white-space:nowrap;letter-spacing:-0.45px;">C0006</div>
<div style="position:absolute;left:158px;top:462px;width:1px;height:20px;background:#fff8f0"></div>
<div style="position:absolute;left:162px;top:462px;font-size:12px;transform:scaleX(0.87);transform-origin:0 0;color:#4a0000;white-space:nowrap;">Csirke far-hát eh.</div>
<div style="position:absolute;left:269px;top:462px;width:1px;height:20px;background:#fff8f0"></div>
<div style="position:absolute;left:270px;top:462px;width:39px;text-align:right;font-size:12px;transform:scaleX(0.87);transform-origin:100% 0;color:#4a0000;white-space:nowrap;letter-spacing:-0.05px;">10006</div>
<div style="position:absolute;left:311px;top:462px;width:1px;height:20px;background:#fff8f0"></div>
<div style="position:absolute;left:315px;top:462px;font-size:12px;transform:scaleX(0.87);transform-origin:0 0;color:#4a0000;white-space:nowrap;">KG</div>
<div style="position:absolute;left:349px;top:462px;width:1px;height:20px;background:#fff8f0"></div>
<div style="position:absolute;left:350px;top:462px;width:57px;text-align:right;font-size:12px;transform:scaleX(0.87);transform-origin:100% 0;color:#4a0000;white-space:nowrap;letter-spacing:-0.05px;">85</div>
<div style="position:absolute;left:409px;top:462px;width:1px;height:20px;background:#fff8f0"></div>
<div style="position:absolute;left:410px;top:462px;width:66px;text-align:right;font-size:12px;transform:scaleX(0.87);transform-origin:100% 0;color:#4a0000;white-space:nowrap;letter-spacing:-0.05px;">2 550</div>
<div style="position:absolute;left:478px;top:462px;width:1px;height:20px;background:#fff8f0"></div>
<div style="position:absolute;left:479px;top:462px;width:107px;text-align:right;font-size:12px;transform:scaleX(0.87);transform-origin:100% 0;color:#4a0000;white-space:nowrap;letter-spacing:-0.05px;">85</div>
<div style="position:absolute;left:588px;top:462px;width:1px;height:20px;background:#fff8f0"></div>
<div style="position:absolute;left:589px;top:462px;width:88px;text-align:right;font-size:12px;transform:scaleX(0.87);transform-origin:100% 0;color:#4a0000;white-space:nowrap;letter-spacing:-0.05px;">2 550</div>
<div style="position:absolute;left:679px;top:462px;width:1px;height:20px;background:#fff8f0"></div>
<div style="position:absolute;left:680px;top:462px;width:110px;text-align:right;font-size:12px;transform:scaleX(0.87);transform-origin:100% 0;color:#4a0000;white-space:nowrap;letter-spacing:-0.05px;">0</div>
<div style="position:absolute;left:792px;top:462px;width:1px;height:20px;background:#fff8f0"></div>
<div style="position:absolute;left:885px;top:462px;width:1px;height:20px;background:#fff8f0"></div>
<div style="position:absolute;left:7px;top:482px;width:30px;height:20px;box-sizing:border-box;background:#ada9da;border-top:1px solid #e4e2f6;border-left:1px solid #e4e2f6;border-bottom:1px solid #1c1848;border-right:1px solid #1c1848;box-shadow:inset -1px -1px 0 #7c78b4;"><div style="position:absolute;left:4px;top:2px;font-size:12px;transform:scaleX(0.87);transform-origin:0 0;line-height:13px;">18</div></div>
<div style="position:absolute;left:37px;top:482px;width:886px;height:20px;background:#ff0000"></div>
<div style="position:absolute;left:36px;top:482px;width:1px;height:20px;background:#fff8f0"></div>
<div style="position:absolute;left:40px;top:482px;font-size:12px;transform:scaleX(0.87);transform-origin:0 0;color:#4a0000;white-space:nowrap;letter-spacing:-0.05px;">2007-09-10</div>
<div style="position:absolute;left:100px;top:482px;width:1px;height:20px;background:#fff8f0"></div>
<div style="position:absolute;left:104px;top:482px;font-size:12px;transform:scaleX(0.87);transform-origin:0 0;color:#4a0000;white-space:nowrap;letter-spacing:-0.45px;">C0006</div>
<div style="position:absolute;left:158px;top:482px;width:1px;height:20px;background:#fff8f0"></div>
<div style="position:absolute;left:162px;top:482px;font-size:12px;transform:scaleX(0.87);transform-origin:0 0;color:#4a0000;white-space:nowrap;">Csirke far-hát eh.</div>
<div style="position:absolute;left:269px;top:482px;width:1px;height:20px;background:#fff8f0"></div>
<div style="position:absolute;left:270px;top:482px;width:39px;text-align:right;font-size:12px;transform:scaleX(0.87);transform-origin:100% 0;color:#4a0000;white-space:nowrap;letter-spacing:-0.05px;">10006</div>
<div style="position:absolute;left:311px;top:482px;width:1px;height:20px;background:#fff8f0"></div>
<div style="position:absolute;left:315px;top:482px;font-size:12px;transform:scaleX(0.87);transform-origin:0 0;color:#4a0000;white-space:nowrap;">KG</div>
<div style="position:absolute;left:349px;top:482px;width:1px;height:20px;background:#fff8f0"></div>
<div style="position:absolute;left:350px;top:482px;width:57px;text-align:right;font-size:12px;transform:scaleX(0.87);transform-origin:100% 0;color:#4a0000;white-space:nowrap;letter-spacing:-0.05px;">85</div>
<div style="position:absolute;left:409px;top:482px;width:1px;height:20px;background:#fff8f0"></div>
<div style="position:absolute;left:410px;top:482px;width:66px;text-align:right;font-size:12px;transform:scaleX(0.87);transform-origin:100% 0;color:#4a0000;white-space:nowrap;letter-spacing:-0.05px;">2 550</div>
<div style="position:absolute;left:478px;top:482px;width:1px;height:20px;background:#fff8f0"></div>
<div style="position:absolute;left:479px;top:482px;width:107px;text-align:right;font-size:12px;transform:scaleX(0.87);transform-origin:100% 0;color:#4a0000;white-space:nowrap;letter-spacing:-0.05px;">85</div>
<div style="position:absolute;left:588px;top:482px;width:1px;height:20px;background:#fff8f0"></div>
<div style="position:absolute;left:589px;top:482px;width:88px;text-align:right;font-size:12px;transform:scaleX(0.87);transform-origin:100% 0;color:#4a0000;white-space:nowrap;letter-spacing:-0.05px;">2 550</div>
<div style="position:absolute;left:679px;top:482px;width:1px;height:20px;background:#fff8f0"></div>
<div style="position:absolute;left:680px;top:482px;width:110px;text-align:right;font-size:12px;transform:scaleX(0.87);transform-origin:100% 0;color:#4a0000;white-space:nowrap;letter-spacing:-0.05px;">0</div>
<div style="position:absolute;left:792px;top:482px;width:1px;height:20px;background:#fff8f0"></div>
<div style="position:absolute;left:885px;top:482px;width:1px;height:20px;background:#fff8f0"></div>
<div style="position:absolute;left:37px;top:142px;width:64px;height:20px;box-sizing:border-box;border:2px solid #000"></div>
<div style="position:absolute;left:7px;top:142px;width:2px;height:20px;background:#000"></div>
<div style="position:absolute;left:7px;top:571px;width:915px;height:15px;background:repeating-conic-gradient(#e2e0f8 0 25%,#a8a4d6 0 50%) 0 0/2px 2px"></div>
<div style="position:absolute;left:7px;top:571px;width:15px;height:16px;box-sizing:border-box;background:#ada9da;border-top:1px solid #e4e2f6;border-left:1px solid #e4e2f6;border-bottom:1px solid #1c1848;border-right:1px solid #1c1848;box-shadow:inset -1px -1px 0 #7c78b4;"><svg style="position:absolute;left:4px;top:4px" width="5" height="8"><path d="M4 0v8L0 4z" fill="#000"/></svg></div>
<div style="position:absolute;left:22px;top:571px;width:212px;height:16px;box-sizing:border-box;background:#ada9da;border-top:1px solid #e4e2f6;border-left:1px solid #e4e2f6;border-bottom:1px solid #1c1848;border-right:1px solid #1c1848;box-shadow:inset -1px -1px 0 #7c78b4;"></div>
<div style="position:absolute;left:907px;top:571px;width:15px;height:16px;box-sizing:border-box;background:#ada9da;border-top:1px solid #e4e2f6;border-left:1px solid #e4e2f6;border-bottom:1px solid #1c1848;border-right:1px solid #1c1848;box-shadow:inset -1px -1px 0 #7c78b4;"><svg style="position:absolute;left:5px;top:4px" width="5" height="8"><path d="M0 0v8l4-4z" fill="#000"/></svg></div>
<div style="position:absolute;left:0px;top:587px;width:1276px;height:1px;background:#e4e2f6"></div>
<div style="position:absolute;left:0px;top:589px;width:1276px;height:1px;background:#d4d2f0"></div>
<div style="position:absolute;left:0px;top:590px;width:1276px;height:1px;background:#9894c8"></div>
<div style="position:absolute;left:0px;top:592px;width:1276px;height:2px;background:#1c1848"></div>
<div style="position:absolute;left:923px;top:121px;width:1px;height:467px;background:#e4e2f6"></div>
<div style="position:absolute;left:924px;top:80px;width:1px;height:508px;background:#7c78b4"></div>
<div style="position:absolute;left:925px;top:80px;width:1px;height:508px;background:#e4e2f6"></div>
<div style="position:absolute;left:928px;top:80px;width:2px;height:508px;background:#1c1848"></div>
<div style="position:absolute;left:1278px;top:75px;width:2px;height:717px;background:#1c1848"></div>
<div style="position:absolute;left:1276px;top:75px;width:1px;height:716px;background:#cfcbf0"></div>
<div style="position:absolute;left:933px;top:88px;font-size:12px;transform:scaleX(0.87);transform-origin:0 0;line-height:13px;color:#000;white-space:nowrap;">Partner:</div>
<div style="position:absolute;left:933px;top:117px;font-size:12px;transform:scaleX(0.87);transform-origin:0 0;line-height:13px;color:#000;white-space:nowrap;">Cím:</div>
<div style="position:absolute;left:933px;top:145px;font-size:12px;transform:scaleX(0.87);transform-origin:0 0;line-height:13px;color:#000;white-space:nowrap;">Település:</div>
<div style="position:absolute;left:933px;top:173px;font-size:12px;transform:scaleX(0.87);transform-origin:0 0;line-height:13px;color:#000;white-space:nowrap;">Biz.szám:</div>
<div style="position:absolute;left:933px;top:200px;font-size:12px;transform:scaleX(0.87);transform-origin:0 0;line-height:13px;color:#000;white-space:nowrap;">Státusz:</div>
<div style="position:absolute;left:933px;top:229px;font-size:12px;transform:scaleX(0.87);transform-origin:0 0;line-height:13px;color:#000;white-space:nowrap;">Parítás:</div>
<div style="position:absolute;left:933px;top:257px;font-size:12px;transform:scaleX(0.87);transform-origin:0 0;line-height:13px;color:#000;white-space:nowrap;">Gyártási utasítás:</div>
<div style="position:absolute;left:933px;top:286px;font-size:12px;transform:scaleX(0.87);transform-origin:0 0;line-height:13px;color:#000;white-space:nowrap;">Fizetési mód:</div>
<div style="position:absolute;left:933px;top:314px;font-size:12px;transform:scaleX(0.87);transform-origin:0 0;line-height:13px;color:#000;white-space:nowrap;">Hivatkozás:</div>
<div style="position:absolute;left:933px;top:342px;font-size:12px;transform:scaleX(0.87);transform-origin:0 0;line-height:13px;color:#000;white-space:nowrap;">Szállítólevél:</div>
<div style="position:absolute;left:933px;top:368px;font-size:12px;transform:scaleX(0.87);transform-origin:0 0;line-height:13px;color:#000;white-space:nowrap;">Túra:</div>
<div style="position:absolute;left:933px;top:395px;font-size:12px;transform:scaleX(0.87);transform-origin:0 0;line-height:13px;color:#000;white-space:nowrap;">Státusz:</div>
<div style="position:absolute;left:933px;top:424px;font-size:12px;transform:scaleX(0.87);transform-origin:0 0;line-height:13px;color:#000;white-space:nowrap;">Túra indítás:</div>
<div style="position:absolute;left:933px;top:453px;font-size:12px;transform:scaleX(0.87);transform-origin:0 0;line-height:13px;color:#000;white-space:nowrap;">Sofőr/Rendszám:</div>
<div style="position:absolute;left:933px;top:481px;font-size:12px;transform:scaleX(0.87);transform-origin:0 0;line-height:13px;color:#000;white-space:nowrap;">Megjegyzés:</div>
<div style="position:absolute;left:933px;top:510px;font-size:12px;transform:scaleX(0.87);transform-origin:0 0;line-height:13px;color:#000;white-space:nowrap;">Kiadandó db:</div>
<div style="position:absolute;left:933px;top:539px;font-size:12px;transform:scaleX(0.87);transform-origin:0 0;line-height:13px;color:#000;white-space:nowrap;">Kiadott db:</div>
<div style="position:absolute;left:933px;top:567px;font-size:12px;transform:scaleX(0.87);transform-origin:0 0;line-height:13px;color:#000;white-space:nowrap;">Visszavételezett db:</div>
<div style="position:absolute;left:1030px;top:85px;width:81px;height:18px;box-sizing:border-box;background:#d0f8b8;border-top:1px solid #0c0a20;border-left:1px solid #0c0a20;border-bottom:1px solid #e4e2f6;border-right:1px solid #e4e2f6;box-shadow:inset 1px 1px 0 #403c70;"><div style="position:absolute;left:2px;top:2px;font-size:12px;transform:scaleX(0.87);transform-origin:0 0;white-space:nowrap">1005</div></div>
<div style="position:absolute;left:1112px;top:85px;width:162px;height:18px;box-sizing:border-box;background:#d0f8b8;border-top:1px solid #0c0a20;border-left:1px solid #0c0a20;border-bottom:1px solid #e4e2f6;border-right:1px solid #e4e2f6;box-shadow:inset 1px 1px 0 #403c70;"><div style="position:absolute;left:2px;top:2px;font-size:12px;transform:scaleX(0.87);transform-origin:0 0;white-space:nowrap">Szabó Gáspár</div></div>
<div style="position:absolute;left:1030px;top:114px;width:81px;height:18px;box-sizing:border-box;background:#d0f8b8;border-top:1px solid #0c0a20;border-left:1px solid #0c0a20;border-bottom:1px solid #e4e2f6;border-right:1px solid #e4e2f6;box-shadow:inset 1px 1px 0 #403c70;"><div style="position:absolute;left:2px;top:2px;font-size:12px;transform:scaleX(0.87);transform-origin:0 0;white-space:nowrap">1005</div></div>
<div style="position:absolute;left:1112px;top:114px;width:162px;height:18px;box-sizing:border-box;background:#d0f8b8;border-top:1px solid #0c0a20;border-left:1px solid #0c0a20;border-bottom:1px solid #e4e2f6;border-right:1px solid #e4e2f6;box-shadow:inset 1px 1px 0 #403c70;"><div style="position:absolute;left:2px;top:2px;font-size:12px;transform:scaleX(0.87);transform-origin:0 0;white-space:nowrap">Szép u. 67.</div></div>
<div style="position:absolute;left:1030px;top:142px;width:81px;height:18px;box-sizing:border-box;background:#d0f8b8;border-top:1px solid #0c0a20;border-left:1px solid #0c0a20;border-bottom:1px solid #e4e2f6;border-right:1px solid #e4e2f6;box-shadow:inset 1px 1px 0 #403c70;"><div style="position:absolute;left:2px;top:2px;font-size:12px;transform:scaleX(0.87);transform-origin:0 0;white-space:nowrap">6300</div></div>
<div style="position:absolute;left:1112px;top:142px;width:162px;height:18px;box-sizing:border-box;background:#d0f8b8;border-top:1px solid #0c0a20;border-left:1px solid #0c0a20;border-bottom:1px solid #e4e2f6;border-right:1px solid #e4e2f6;box-shadow:inset 1px 1px 0 #403c70;"><div style="position:absolute;left:2px;top:2px;font-size:12px;transform:scaleX(0.87);transform-origin:0 0;white-space:nowrap">Kalocsa</div></div>
<div style="position:absolute;left:1030px;top:170px;width:214px;height:18px;box-sizing:border-box;background:#d0f8b8;border-top:1px solid #0c0a20;border-left:1px solid #0c0a20;border-bottom:1px solid #e4e2f6;border-right:1px solid #e4e2f6;box-shadow:inset 1px 1px 0 #403c70;"><div style="position:absolute;left:2px;top:2px;font-size:12px;transform:scaleX(0.87);transform-origin:0 0;white-space:nowrap">165-VMS/2007</div></div>
<div style="position:absolute;left:1246px;top:167px;width:28px;height:24px;box-sizing:border-box;background:#ada9da;border-top:1px solid #e4e2f6;border-left:1px solid #e4e2f6;border-bottom:1px solid #1c1848;border-right:1px solid #1c1848;box-shadow:inset -1px -1px 0 #7c78b4;"><div style="position:absolute;left:8px;top:4px;font-size:12px;transform:scaleX(0.87);transform-origin:0 0">...</div></div>
<div style="position:absolute;left:1030px;top:197px;width:244px;height:18px;box-sizing:border-box;background:#d0f8b8;border-top:1px solid #0c0a20;border-left:1px solid #0c0a20;border-bottom:1px solid #e4e2f6;border-right:1px solid #e4e2f6;box-shadow:inset 1px 1px 0 #403c70;"><div style="position:absolute;left:5px;top:2px;font-size:12px;transform:scaleX(0.87);transform-origin:0 0">Normál</div></div>
<div style="position:absolute;left:1257px;top:198px;width:16px;height:16px;box-sizing:border-box;background:#ada9da;border-top:1px solid #e4e2f6;border-left:1px solid #e4e2f6;border-bottom:1px solid #1c1848;border-right:1px solid #1c1848;box-shadow:inset -1px -1px 0 #7c78b4;"><svg style="position:absolute;left:3px;top:6px" width="8" height="5"><path d="M0 0h7l-3.5 4z" fill="#000"/></svg></div>
<div style="position:absolute;left:1030px;top:226px;width:81px;height:18px;box-sizing:border-box;background:#d0f8b8;border-top:1px solid #0c0a20;border-left:1px solid #0c0a20;border-bottom:1px solid #e4e2f6;border-right:1px solid #e4e2f6;box-shadow:inset 1px 1px 0 #403c70;"><div style="position:absolute;left:2px;top:2px;font-size:12px;transform:scaleX(0.87);transform-origin:0 0;white-space:nowrap">BFD</div></div>
<div style="position:absolute;left:1112px;top:226px;width:162px;height:18px;box-sizing:border-box;background:#d0f8b8;border-top:1px solid #0c0a20;border-left:1px solid #0c0a20;border-bottom:1px solid #e4e2f6;border-right:1px solid #e4e2f6;box-shadow:inset 1px 1px 0 #403c70;"><div style="position:absolute;left:2px;top:2px;font-size:12px;transform:scaleX(0.87);transform-origin:0 0;white-space:nowrap">Belföld</div></div>
<div style="position:absolute;left:1030px;top:254px;width:81px;height:18px;box-sizing:border-box;background:#d0f8b8;border-top:1px solid #0c0a20;border-left:1px solid #0c0a20;border-bottom:1px solid #e4e2f6;border-right:1px solid #e4e2f6;box-shadow:inset 1px 1px 0 #403c70;"></div>
<div style="position:absolute;left:1112px;top:254px;width:162px;height:18px;box-sizing:border-box;background:#d0f8b8;border-top:1px solid #0c0a20;border-left:1px solid #0c0a20;border-bottom:1px solid #e4e2f6;border-right:1px solid #e4e2f6;box-shadow:inset 1px 1px 0 #403c70;"></div>
<div style="position:absolute;left:1030px;top:283px;width:81px;height:18px;box-sizing:border-box;background:#d0f8b8;border-top:1px solid #0c0a20;border-left:1px solid #0c0a20;border-bottom:1px solid #e4e2f6;border-right:1px solid #e4e2f6;box-shadow:inset 1px 1px 0 #403c70;"><div style="position:absolute;left:2px;top:2px;font-size:12px;transform:scaleX(0.87);transform-origin:0 0;white-space:nowrap">KP</div></div>
<div style="position:absolute;left:1112px;top:283px;width:162px;height:18px;box-sizing:border-box;background:#d0f8b8;border-top:1px solid #0c0a20;border-left:1px solid #0c0a20;border-bottom:1px solid #e4e2f6;border-right:1px solid #e4e2f6;box-shadow:inset 1px 1px 0 #403c70;"><div style="position:absolute;left:2px;top:2px;font-size:12px;transform:scaleX(0.87);transform-origin:0 0;white-space:nowrap">Készpénz</div></div>
<div style="position:absolute;left:1030px;top:312px;width:244px;height:18px;box-sizing:border-box;background:#d0f8b8;border-top:1px solid #0c0a20;border-left:1px solid #0c0a20;border-bottom:1px solid #e4e2f6;border-right:1px solid #e4e2f6;box-shadow:inset 1px 1px 0 #403c70;"></div>
<div style="position:absolute;left:1030px;top:339px;width:214px;height:18px;box-sizing:border-box;background:#d0f8b8;border-top:1px solid #0c0a20;border-left:1px solid #0c0a20;border-bottom:1px solid #e4e2f6;border-right:1px solid #e4e2f6;box-shadow:inset 1px 1px 0 #403c70;"><div style="position:absolute;left:2px;top:2px;font-size:12px;transform:scaleX(0.87);transform-origin:0 0;white-space:nowrap">37-SZLL-KP/2007</div></div>
<div style="position:absolute;left:1246px;top:336px;width:28px;height:24px;box-sizing:border-box;background:#ada9da;border-top:1px solid #e4e2f6;border-left:1px solid #e4e2f6;border-bottom:1px solid #1c1848;border-right:1px solid #1c1848;box-shadow:inset -1px -1px 0 #7c78b4;"><div style="position:absolute;left:8px;top:4px;font-size:12px;transform:scaleX(0.87);transform-origin:0 0">...</div></div>
<div style="position:absolute;left:1030px;top:365px;width:214px;height:18px;box-sizing:border-box;background:#d0f8b8;border-top:1px solid #0c0a20;border-left:1px solid #0c0a20;border-bottom:1px solid #e4e2f6;border-right:1px solid #e4e2f6;box-shadow:inset 1px 1px 0 #403c70;"><div style="position:absolute;left:2px;top:2px;font-size:12px;transform:scaleX(0.87);transform-origin:0 0;white-space:nowrap">070918-???/1</div></div>
<div style="position:absolute;left:1246px;top:362px;width:28px;height:24px;box-sizing:border-box;background:#ada9da;border-top:1px solid #e4e2f6;border-left:1px solid #e4e2f6;border-bottom:1px solid #1c1848;border-right:1px solid #1c1848;box-shadow:inset -1px -1px 0 #7c78b4;"><div style="position:absolute;left:8px;top:4px;font-size:12px;transform:scaleX(0.87);transform-origin:0 0">...</div></div>
<div style="position:absolute;left:1030px;top:392px;width:244px;height:18px;box-sizing:border-box;background:#d0f8b8;border-top:1px solid #0c0a20;border-left:1px solid #0c0a20;border-bottom:1px solid #e4e2f6;border-right:1px solid #e4e2f6;box-shadow:inset 1px 1px 0 #403c70;"><div style="position:absolute;left:5px;top:2px;font-size:12px;transform:scaleX(0.87);transform-origin:0 0">Indítva</div></div>
<div style="position:absolute;left:1257px;top:393px;width:16px;height:16px;box-sizing:border-box;background:#ada9da;border-top:1px solid #e4e2f6;border-left:1px solid #e4e2f6;border-bottom:1px solid #1c1848;border-right:1px solid #1c1848;box-shadow:inset -1px -1px 0 #7c78b4;"><svg style="position:absolute;left:3px;top:6px" width="8" height="5"><path d="M0 0h7l-3.5 4z" fill="#000"/></svg></div>
<div style="position:absolute;left:1030px;top:421px;width:244px;height:18px;box-sizing:border-box;background:#d0f8b8;border-top:1px solid #0c0a20;border-left:1px solid #0c0a20;border-bottom:1px solid #e4e2f6;border-right:1px solid #e4e2f6;box-shadow:inset 1px 1px 0 #403c70;"><div style="position:absolute;left:2px;top:2px;font-size:12px;transform:scaleX(0.87);transform-origin:0 0;white-space:nowrap">2007-09-18</div></div>
<div style="position:absolute;left:1030px;top:450px;width:81px;height:18px;box-sizing:border-box;background:#d0f8b8;border-top:1px solid #0c0a20;border-left:1px solid #0c0a20;border-bottom:1px solid #e4e2f6;border-right:1px solid #e4e2f6;box-shadow:inset 1px 1px 0 #403c70;"></div>
<div style="position:absolute;left:1112px;top:450px;width:162px;height:18px;box-sizing:border-box;background:#d0f8b8;border-top:1px solid #0c0a20;border-left:1px solid #0c0a20;border-bottom:1px solid #e4e2f6;border-right:1px solid #e4e2f6;box-shadow:inset 1px 1px 0 #403c70;"></div>
<div style="position:absolute;left:1030px;top:478px;width:244px;height:18px;box-sizing:border-box;background:#d0f8b8;border-top:1px solid #0c0a20;border-left:1px solid #0c0a20;border-bottom:1px solid #e4e2f6;border-right:1px solid #e4e2f6;box-shadow:inset 1px 1px 0 #403c70;"></div>
<div style="position:absolute;left:1030px;top:507px;width:244px;height:18px;box-sizing:border-box;background:#d0f8b8;border-top:1px solid #0c0a20;border-left:1px solid #0c0a20;border-bottom:1px solid #e4e2f6;border-right:1px solid #e4e2f6;box-shadow:inset 1px 1px 0 #403c70;"></div>
<div style="position:absolute;left:1030px;top:536px;width:244px;height:18px;box-sizing:border-box;background:#d0f8b8;border-top:1px solid #0c0a20;border-left:1px solid #0c0a20;border-bottom:1px solid #e4e2f6;border-right:1px solid #e4e2f6;box-shadow:inset 1px 1px 0 #403c70;"></div>
<div style="position:absolute;left:1030px;top:564px;width:244px;height:18px;box-sizing:border-box;background:#d0f8b8;border-top:1px solid #0c0a20;border-left:1px solid #0c0a20;border-bottom:1px solid #e4e2f6;border-right:1px solid #e4e2f6;box-shadow:inset 1px 1px 0 #403c70;"></div>
<div style="position:absolute;left:171px;top:604px;font-size:12px;transform:scaleX(0.87);transform-origin:0 0;line-height:13px;color:#000;white-space:nowrap;">Össz. darab (gyűjtő):</div>
<div style="position:absolute;left:329px;top:604px;font-size:12px;transform:scaleX(0.87);transform-origin:0 0;line-height:13px;color:#000;white-space:nowrap;">Össz. mennyiség:</div>
<div style="position:absolute;left:484px;top:604px;font-size:12px;transform:scaleX(0.87);transform-origin:0 0;line-height:13px;color:#000;white-space:nowrap;">Össz. súly:</div>
<div style="position:absolute;left:15px;top:622px;font-size:12px;transform:scaleX(0.87);transform-origin:0 0;line-height:13px;color:#000;white-space:nowrap;">Össz. rendelt:</div>
<div style="position:absolute;left:171px;top:619px;width:156px;height:19px;box-sizing:border-box;background:#88c088;border-top:1px solid #0c0a20;border-left:1px solid #0c0a20;border-bottom:1px solid #e4e2f6;border-right:1px solid #e4e2f6;box-shadow:inset 1px 1px 0 #403c70;"><div style="position:absolute;right:2px;top:1px;font-size:12px;transform:scaleX(0.87);transform-origin:100% 0">264</div></div>
<div style="position:absolute;left:328px;top:619px;width:155px;height:19px;box-sizing:border-box;background:#ff88ff;border-top:1px solid #0c0a20;border-left:1px solid #0c0a20;border-bottom:1px solid #e4e2f6;border-right:1px solid #e4e2f6;box-shadow:inset 1px 1px 0 #403c70;"><div style="position:absolute;right:2px;top:1px;font-size:12px;transform:scaleX(0.87);transform-origin:100% 0">1100</div></div>
<div style="position:absolute;left:484px;top:619px;width:155px;height:19px;box-sizing:border-box;background:#88c088;border-top:1px solid #0c0a20;border-left:1px solid #0c0a20;border-bottom:1px solid #e4e2f6;border-right:1px solid #e4e2f6;box-shadow:inset 1px 1px 0 #403c70;"><div style="position:absolute;right:2px;top:1px;font-size:12px;transform:scaleX(0.87);transform-origin:100% 0">1040</div></div>
<div style="position:absolute;left:15px;top:642px;font-size:12px;transform:scaleX(0.87);transform-origin:0 0;line-height:13px;color:#000;white-space:nowrap;">Össz. leosztott:</div>
<div style="position:absolute;left:171px;top:639px;width:156px;height:19px;box-sizing:border-box;background:#88c088;border-top:1px solid #0c0a20;border-left:1px solid #0c0a20;border-bottom:1px solid #e4e2f6;border-right:1px solid #e4e2f6;box-shadow:inset 1px 1px 0 #403c70;"><div style="position:absolute;right:2px;top:1px;font-size:12px;transform:scaleX(0.87);transform-origin:100% 0">264</div></div>
<div style="position:absolute;left:328px;top:639px;width:155px;height:19px;box-sizing:border-box;background:#ff88ff;border-top:1px solid #0c0a20;border-left:1px solid #0c0a20;border-bottom:1px solid #e4e2f6;border-right:1px solid #e4e2f6;box-shadow:inset 1px 1px 0 #403c70;"><div style="position:absolute;right:2px;top:1px;font-size:12px;transform:scaleX(0.87);transform-origin:100% 0">1100</div></div>
<div style="position:absolute;left:484px;top:639px;width:155px;height:19px;box-sizing:border-box;background:#88c088;border-top:1px solid #0c0a20;border-left:1px solid #0c0a20;border-bottom:1px solid #e4e2f6;border-right:1px solid #e4e2f6;box-shadow:inset 1px 1px 0 #403c70;"><div style="position:absolute;right:2px;top:1px;font-size:12px;transform:scaleX(0.87);transform-origin:100% 0">1040</div></div>
<div style="position:absolute;left:15px;top:662px;font-size:12px;transform:scaleX(0.87);transform-origin:0 0;line-height:13px;color:#000;white-space:nowrap;">Össz. kiadott:</div>
<div style="position:absolute;left:171px;top:659px;width:156px;height:19px;box-sizing:border-box;background:#88c088;border-top:1px solid #0c0a20;border-left:1px solid #0c0a20;border-bottom:1px solid #e4e2f6;border-right:1px solid #e4e2f6;box-shadow:inset 1px 1px 0 #403c70;"><div style="position:absolute;right:2px;top:1px;font-size:12px;transform:scaleX(0.87);transform-origin:100% 0">45</div></div>
<div style="position:absolute;left:328px;top:659px;width:155px;height:19px;box-sizing:border-box;background:#ff88ff;border-top:1px solid #0c0a20;border-left:1px solid #0c0a20;border-bottom:1px solid #e4e2f6;border-right:1px solid #e4e2f6;box-shadow:inset 1px 1px 0 #403c70;"><div style="position:absolute;right:2px;top:1px;font-size:12px;transform:scaleX(0.87);transform-origin:100% 0">240</div></div>
<div style="position:absolute;left:484px;top:659px;width:155px;height:19px;box-sizing:border-box;background:#88c088;border-top:1px solid #0c0a20;border-left:1px solid #0c0a20;border-bottom:1px solid #e4e2f6;border-right:1px solid #e4e2f6;box-shadow:inset 1px 1px 0 #403c70;"><div style="position:absolute;right:2px;top:1px;font-size:12px;transform:scaleX(0.87);transform-origin:100% 0">255</div></div>
<div style="position:absolute;left:15px;top:682px;font-size:12px;transform:scaleX(0.87);transform-origin:0 0;line-height:13px;color:#000;white-space:nowrap;">Össz. visszavételezett:</div>
<div style="position:absolute;left:171px;top:679px;width:156px;height:19px;box-sizing:border-box;background:#88c088;border-top:1px solid #0c0a20;border-left:1px solid #0c0a20;border-bottom:1px solid #e4e2f6;border-right:1px solid #e4e2f6;box-shadow:inset 1px 1px 0 #403c70;"><div style="position:absolute;right:2px;top:1px;font-size:12px;transform:scaleX(0.87);transform-origin:100% 0">0</div></div>
<div style="position:absolute;left:328px;top:679px;width:155px;height:19px;box-sizing:border-box;background:#ff88ff;border-top:1px solid #0c0a20;border-left:1px solid #0c0a20;border-bottom:1px solid #e4e2f6;border-right:1px solid #e4e2f6;box-shadow:inset 1px 1px 0 #403c70;"><div style="position:absolute;right:2px;top:1px;font-size:12px;transform:scaleX(0.87);transform-origin:100% 0">0</div></div>
<div style="position:absolute;left:484px;top:679px;width:155px;height:19px;box-sizing:border-box;background:#88c088;border-top:1px solid #0c0a20;border-left:1px solid #0c0a20;border-bottom:1px solid #e4e2f6;border-right:1px solid #e4e2f6;box-shadow:inset 1px 1px 0 #403c70;"><div style="position:absolute;right:2px;top:1px;font-size:12px;transform:scaleX(0.87);transform-origin:100% 0">0</div></div>
<div style="position:absolute;left:15px;top:702px;font-size:12px;transform:scaleX(0.87);transform-origin:0 0;line-height:13px;color:#000;white-space:nowrap;">Össz. átvett:</div>
<div style="position:absolute;left:171px;top:699px;width:156px;height:19px;box-sizing:border-box;background:#88c088;border-top:1px solid #0c0a20;border-left:1px solid #0c0a20;border-bottom:1px solid #e4e2f6;border-right:1px solid #e4e2f6;box-shadow:inset 1px 1px 0 #403c70;"><div style="position:absolute;right:2px;top:1px;font-size:12px;transform:scaleX(0.87);transform-origin:100% 0">264</div></div>
<div style="position:absolute;left:328px;top:699px;width:155px;height:19px;box-sizing:border-box;background:#ff88ff;border-top:1px solid #0c0a20;border-left:1px solid #0c0a20;border-bottom:1px solid #e4e2f6;border-right:1px solid #e4e2f6;box-shadow:inset 1px 1px 0 #403c70;"><div style="position:absolute;right:2px;top:1px;font-size:12px;transform:scaleX(0.87);transform-origin:100% 0">1115</div></div>
<div style="position:absolute;left:484px;top:699px;width:155px;height:19px;box-sizing:border-box;background:#88c088;border-top:1px solid #0c0a20;border-left:1px solid #0c0a20;border-bottom:1px solid #e4e2f6;border-right:1px solid #e4e2f6;box-shadow:inset 1px 1px 0 #403c70;"><div style="position:absolute;right:2px;top:1px;font-size:12px;transform:scaleX(0.87);transform-origin:100% 0">1070</div></div>
<div style="position:absolute;left:15px;top:722px;font-size:12px;transform:scaleX(0.87);transform-origin:0 0;line-height:13px;color:#000;white-space:nowrap;">Össz. visszáru:</div>
<div style="position:absolute;left:171px;top:719px;width:156px;height:19px;box-sizing:border-box;background:#88c088;border-top:1px solid #0c0a20;border-left:1px solid #0c0a20;border-bottom:1px solid #e4e2f6;border-right:1px solid #e4e2f6;box-shadow:inset 1px 1px 0 #403c70;"><div style="position:absolute;right:2px;top:1px;font-size:12px;transform:scaleX(0.87);transform-origin:100% 0">0</div></div>
<div style="position:absolute;left:328px;top:719px;width:155px;height:19px;box-sizing:border-box;background:#ff88ff;border-top:1px solid #0c0a20;border-left:1px solid #0c0a20;border-bottom:1px solid #e4e2f6;border-right:1px solid #e4e2f6;box-shadow:inset 1px 1px 0 #403c70;"><div style="position:absolute;right:2px;top:1px;font-size:12px;transform:scaleX(0.87);transform-origin:100% 0">0</div></div>
<div style="position:absolute;left:484px;top:719px;width:155px;height:19px;box-sizing:border-box;background:#88c088;border-top:1px solid #0c0a20;border-left:1px solid #0c0a20;border-bottom:1px solid #e4e2f6;border-right:1px solid #e4e2f6;box-shadow:inset 1px 1px 0 #403c70;"><div style="position:absolute;right:2px;top:1px;font-size:12px;transform:scaleX(0.87);transform-origin:100% 0">0</div></div>
<div style="position:absolute;left:15px;top:742px;font-size:12px;transform:scaleX(0.87);transform-origin:0 0;line-height:13px;color:#000;white-space:nowrap;">Össz. átadott:</div>
<div style="position:absolute;left:171px;top:739px;width:156px;height:19px;box-sizing:border-box;background:#88c088;border-top:1px solid #0c0a20;border-left:1px solid #0c0a20;border-bottom:1px solid #e4e2f6;border-right:1px solid #e4e2f6;box-shadow:inset 1px 1px 0 #403c70;"><div style="position:absolute;right:2px;top:1px;font-size:12px;transform:scaleX(0.87);transform-origin:100% 0">264</div></div>
<div style="position:absolute;left:328px;top:739px;width:155px;height:19px;box-sizing:border-box;background:#ff88ff;border-top:1px solid #0c0a20;border-left:1px solid #0c0a20;border-bottom:1px solid #e4e2f6;border-right:1px solid #e4e2f6;box-shadow:inset 1px 1px 0 #403c70;"><div style="position:absolute;right:2px;top:1px;font-size:12px;transform:scaleX(0.87);transform-origin:100% 0">1115</div></div>
<div style="position:absolute;left:484px;top:739px;width:155px;height:19px;box-sizing:border-box;background:#88c088;border-top:1px solid #0c0a20;border-left:1px solid #0c0a20;border-bottom:1px solid #e4e2f6;border-right:1px solid #e4e2f6;box-shadow:inset 1px 1px 0 #403c70;"><div style="position:absolute;right:2px;top:1px;font-size:12px;transform:scaleX(0.87);transform-origin:100% 0">1070</div></div>
<div style="position:absolute;left:641px;top:645px;width:623px;height:111px;box-sizing:border-box;border:1px solid #58548c;box-shadow:1px 1px 0 #e4e2f6, inset 1px 1px 0 #e4e2f6"></div>
<div style="position:absolute;left:648px;top:639px;font-size:12px;transform:scaleX(0.87);transform-origin:0 0;line-height:13px;color:#000;white-space:nowrap;background:#ada9da;padding:0 1px;">Összesített értékek pénznemenként</div>
<div style="position:absolute;left:674px;top:657px;font-size:12px;transform:scaleX(0.87);transform-origin:0 0;line-height:13px;color:#000;white-space:nowrap;">Össz. nettó</div>
<div style="position:absolute;left:867px;top:657px;font-size:12px;transform:scaleX(0.87);transform-origin:0 0;line-height:13px;color:#000;white-space:nowrap;">Össz. adó</div>
<div style="position:absolute;left:1061px;top:657px;font-size:12px;transform:scaleX(0.87);transform-origin:0 0;line-height:13px;color:#000;white-space:nowrap;">Össz. bruttó</div>
<div style="position:absolute;left:651px;top:675px;font-size:12px;transform:scaleX(0.87);transform-origin:0 0;line-height:13px;color:#000;white-space:nowrap;">HUF</div>
<div style="position:absolute;left:651px;top:695px;font-size:12px;transform:scaleX(0.87);transform-origin:0 0;line-height:13px;color:#000;white-space:nowrap;">EUR</div>
<div style="position:absolute;left:674px;top:671px;width:193px;height:19px;box-sizing:border-box;background:#88c088;border-top:1px solid #0c0a20;border-left:1px solid #0c0a20;border-bottom:1px solid #e4e2f6;border-right:1px solid #e4e2f6;box-shadow:inset 1px 1px 0 #403c70;"><div style="position:absolute;right:2px;top:2px;font-size:12px;transform:scaleX(0.87);transform-origin:100% 0">9000</div></div>
<div style="position:absolute;left:868px;top:671px;width:193px;height:19px;box-sizing:border-box;background:#88c088;border-top:1px solid #0c0a20;border-left:1px solid #0c0a20;border-bottom:1px solid #e4e2f6;border-right:1px solid #e4e2f6;box-shadow:inset 1px 1px 0 #403c70;"><div style="position:absolute;right:2px;top:2px;font-size:12px;transform:scaleX(0.87);transform-origin:100% 0">2250</div></div>
<div style="position:absolute;left:1062px;top:671px;width:192px;height:19px;box-sizing:border-box;background:#88c088;border-top:1px solid #0c0a20;border-left:1px solid #0c0a20;border-bottom:1px solid #e4e2f6;border-right:1px solid #e4e2f6;box-shadow:inset 1px 1px 0 #403c70;"><div style="position:absolute;right:2px;top:2px;font-size:12px;transform:scaleX(0.87);transform-origin:100% 0">11250</div></div>
<div style="position:absolute;left:674px;top:691px;width:193px;height:19px;box-sizing:border-box;background:#88c088;border-top:1px solid #0c0a20;border-left:1px solid #0c0a20;border-bottom:1px solid #e4e2f6;border-right:1px solid #e4e2f6;box-shadow:inset 1px 1px 0 #403c70;"><div style="position:absolute;right:2px;top:2px;font-size:12px;transform:scaleX(0.87);transform-origin:100% 0">30</div></div>
<div style="position:absolute;left:868px;top:691px;width:193px;height:19px;box-sizing:border-box;background:#88c088;border-top:1px solid #0c0a20;border-left:1px solid #0c0a20;border-bottom:1px solid #e4e2f6;border-right:1px solid #e4e2f6;box-shadow:inset 1px 1px 0 #403c70;"><div style="position:absolute;right:2px;top:2px;font-size:12px;transform:scaleX(0.87);transform-origin:100% 0">7.5</div></div>
<div style="position:absolute;left:1062px;top:691px;width:192px;height:19px;box-sizing:border-box;background:#88c088;border-top:1px solid #0c0a20;border-left:1px solid #0c0a20;border-bottom:1px solid #e4e2f6;border-right:1px solid #e4e2f6;box-shadow:inset 1px 1px 0 #403c70;"><div style="position:absolute;right:2px;top:2px;font-size:12px;transform:scaleX(0.87);transform-origin:100% 0">37.5</div></div>
<div style="position:absolute;left:4px;top:773px;width:64px;height:16px;box-sizing:border-box;border-top:1px solid #8480b8;border-left:1px solid #8480b8;border-bottom:1px solid #e4e2f6;border-right:1px solid #e4e2f6;overflow:hidden"><div style="position:absolute;left:1px;top:0px;font-size:12px;transform:scaleX(0.87);transform-origin:0 0;white-space:nowrap">-v1.93pre4X</div></div>
<div style="position:absolute;left:69px;top:773px;width:125px;height:16px;box-sizing:border-box;border-top:1px solid #8480b8;border-left:1px solid #8480b8;border-bottom:1px solid #e4e2f6;border-right:1px solid #e4e2f6;overflow:hidden"><div style="position:absolute;left:2px;top:0px;font-size:12px;transform:scaleX(0.87);transform-origin:0 0">1 / 18</div></div>
<div style="position:absolute;left:197px;top:773px;width:22px;height:16px;box-sizing:border-box;border-top:1px solid #8480b8;border-left:1px solid #8480b8;border-bottom:1px solid #e4e2f6;border-right:1px solid #e4e2f6;overflow:hidden"><div style="position:absolute;left:1px;top:1px;width:11px;height:11px;border-radius:50%;background:#fff;border:2px solid;border-color:#202040 #c8c8d8 #e8e8f0 #202040;box-sizing:border-box"></div></div>
<div style="position:absolute;left:222px;top:773px;width:1038px;height:16px;box-sizing:border-box;border-top:1px solid #8480b8;border-left:1px solid #8480b8;border-bottom:1px solid #e4e2f6;border-right:1px solid #e4e2f6;overflow:hidden"><div style="position:absolute;left:2px;top:0px;font-size:12px;transform:scaleX(0.87);transform-origin:0 0;white-space:nowrap">(*)[Szállítási nap]-&gt;A dátum</div></div>
<div style="position:absolute;left:0px;top:791px;width:1280px;height:1px;background:#1c1848"></div>
<svg style="position:absolute;left:1264px;top:776px" width="14" height="14"><path d="M13 2L2 13M13 6L6 13M13 10L10 13" stroke="#3c3870" stroke-width="1.2"/><path d="M13 3.5L3.5 13M13 7.5L7.5 13M13 11.5L11.5 13" stroke="#e8e6f8" stroke-width="0.8"/></svg>
<div style="position:absolute;left:0px;top:795px;width:1280px;height:1px;background:#cfcbf0"></div>
<div style="position:absolute;left:0px;top:52px;width:2px;height:740px;background:#d0ccf0"></div>
</body></html>
